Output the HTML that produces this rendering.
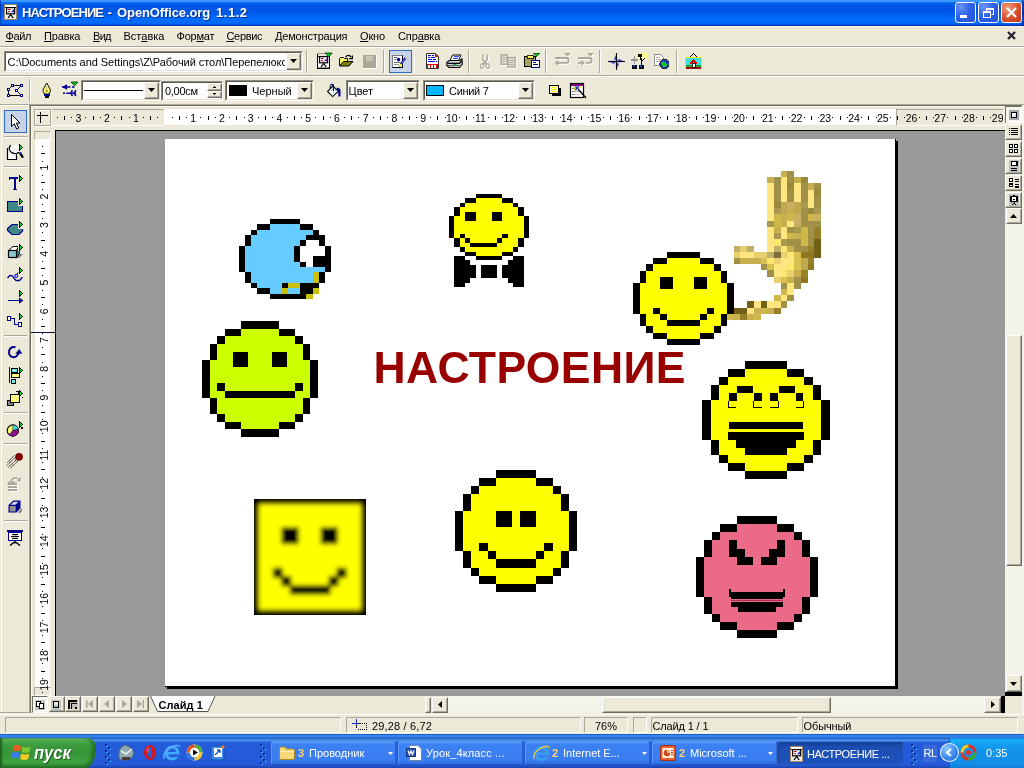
<!DOCTYPE html>
<html lang="ru"><head><meta charset="utf-8"><title>НАСТРОЕНИЕ - OpenOffice.org 1.1.2</title>
<style>
html,body{margin:0;padding:0;background:#ece9d8;}
body{width:1024px;height:768px;overflow:hidden;font-family:"Liberation Sans",sans-serif;font-size:11px;color:#000;}
#root{position:relative;width:1024px;height:768px;overflow:hidden;will-change:transform;}
.a{position:absolute;}
.t{position:absolute;white-space:nowrap;line-height:13px;height:13px;}
svg{position:absolute;overflow:visible;}
.px{shape-rendering:crispEdges;}
.btn{position:absolute;background:#ece9d8;border:1px solid;border-color:#fff #716f64 #716f64 #fff;box-sizing:border-box;}
.btn:after{content:"";position:absolute;left:0;top:0;right:0;bottom:0;border:1px solid;border-color:#ece9d8 #aca899 #aca899 #ece9d8;}
.sunk{position:absolute;box-sizing:border-box;border:1px solid;border-color:#aca899 #fff #fff #aca899;}
.field{position:absolute;box-sizing:border-box;background:#fff;border:1px solid;border-color:#8f8c7f #fff #fff #8f8c7f;}
.field:after{content:"";position:absolute;left:0;top:0;right:0;bottom:0;border:1px solid;border-color:#5a584f #e4e1d2 #e4e1d2 #5a584f;}
.vsep{position:absolute;width:1px;background:#aca899;border-right:1px solid #fff;}
.hsep{position:absolute;height:1px;background:#aca899;border-bottom:1px solid #fff;}
u{text-decoration:underline;text-decoration-thickness:1px;text-underline-offset:1px;}
</style></head><body><div id="root">
<div class="a" style="left:0;top:0;width:1024px;height:26px;background:linear-gradient(#3d95ff 0px,#3d95ff 1px,#3d95ff 1px,#3d95ff 2px,#0473fc 2px,#0473fc 3px,#0265ee 3px,#0265ee 4px,#005ae8 4px,#005ae8 5px,#0057e5 5px,#0057e5 6px,#0057e5 6px,#0057e5 7px,#0057e5 7px,#0057e5 8px,#0057e5 8px,#0057e5 9px,#0057e5 9px,#0057e5 10px,#0057e5 10px,#0057e5 11px,#0057e5 11px,#0057e5 12px,#0059e8 12px,#0059e8 13px,#005cec 13px,#005cec 14px,#005ff0 14px,#005ff0 15px,#0062f4 15px,#0062f4 16px,#0066f9 16px,#0066f9 17px,#0069fd 17px,#0069fd 18px,#026bff 18px,#026bff 19px,#036cff 19px,#036cff 20px,#036cff 20px,#036cff 21px,#036cff 21px,#036cff 22px,#036cff 22px,#036cff 23px,#0064f4 23px,#0064f4 24px,#0052de 24px,#0052de 25px,#0034c4 25px,#0034c4 26px);"></div>
<div class="a" style="left:0px;top:0px;width:1px;height:26px;background:rgba(0,20,120,0.45);"></div><div class="a" style="left:1022px;top:0px;width:2px;height:26px;background:rgba(0,20,120,0.5);"></div>
<svg style="left:4px;top:4px" width="13" height="16" viewBox="0 0 13 16"><rect x="0.5" y="0.5" width="12" height="15" fill="#f0efe6" stroke="#a08868" stroke-width="1"/><rect x="1" y="1" width="11" height="2" fill="#fff"/><rect x="1" y="3" width="11" height="1" fill="#000"/><rect x="2.6" y="3.6" width="8" height="6.2" fill="#fff" stroke="#000" stroke-width="1.2"/><rect x="4" y="5" width="2.6" height="1" fill="#b00000"/><rect x="4" y="7.2" width="2.2" height="1" fill="#b00000"/><path d="M7 8.3L9.6 5.2V8.3Z" fill="#2020e8"/><path d="M9 6L9.9 5V8.3H9Z" fill="#900090"/><path d="M6.6 9.8V11M6.6 10.5L4.3 13.6M6.6 10.5L8.9 13.6" stroke="#000" stroke-width="1.2" stroke-linecap="round" fill="none"/></svg>
<div class="t" style="left:22px;top:5px;color:#fff;font-weight:bold;font-size:13px;line-height:16px;height:16px;text-shadow:1px 1px 0 #0a3296;"><span style="letter-spacing:-0.9px">НАСТРОЕНИЕ</span><span style="letter-spacing:0.8px"> - </span><span style="letter-spacing:-0.12px">OpenOffice.org</span><span style="letter-spacing:2.4px"> </span><span style="letter-spacing:0.5px">1.1.2</span></div>
<div class="a" style="left:955px;top:2px;width:21px;height:21px;box-sizing:border-box;border:1px solid #fff;border-radius:3px;background:radial-gradient(circle at 25% 20%,#6a94f8 0%,#2e62ea 45%,#2452d8 100%);"></div><svg style="left:955px;top:2px" width="21" height="21" viewBox="0 0 21 21"><rect x="5" y="13" width="7" height="3" fill="#fff"/></svg>
<div class="a" style="left:978px;top:2px;width:21px;height:21px;box-sizing:border-box;border:1px solid #fff;border-radius:3px;background:radial-gradient(circle at 25% 20%,#6a94f8 0%,#2e62ea 45%,#2452d8 100%);"></div><svg style="left:978px;top:2px" width="21" height="21" viewBox="0 0 21 21"><path d="M8.5 7.5H15.5V12.5H13.5M8.5 7.5V9.5" stroke="#fff" stroke-width="1" fill="none"/><rect x="8" y="6" width="8" height="2" fill="#fff"/><rect x="5.5" y="10.5" width="7" height="5" fill="none" stroke="#fff"/><rect x="5" y="9" width="8" height="2" fill="#fff"/></svg>
<div class="a" style="left:1001px;top:2px;width:21px;height:21px;box-sizing:border-box;border:1px solid #fff;border-radius:3px;background:radial-gradient(circle at 30% 25%,#f0a080 0%,#d8502c 55%,#b83818 100%);"></div><svg style="left:1001px;top:2px" width="21" height="21" viewBox="0 0 21 21"><path d="M6 6L15 15M15 6L6 15" stroke="#fff" stroke-width="2.2"/></svg>
<div class="a" style="left:0px;top:26px;width:1024px;height:20px;background:#ece9d8;"></div>
<div class="a" style="left:0px;top:26px;width:1024px;height:1px;background:#faf3da;"></div>
<div class="t m" style="left:5.6px;top:30px;letter-spacing:-0.375px;"><u>Ф</u>айл</div>
<div class="t m" style="left:44px;top:30px;letter-spacing:-0.15px;"><u>П</u>равка</div>
<div class="t m" style="left:93px;top:30px;letter-spacing:-0.7px;"><u>В</u>ид</div>
<div class="t m" style="left:123.5px;top:30px;letter-spacing:0px;">Вст<u>а</u>вка</div>
<div class="t m" style="left:176.5px;top:30px;letter-spacing:-0.23px;">Фор<u>м</u>ат</div>
<div class="t m" style="left:226.5px;top:30px;letter-spacing:-0.35px;"><u>С</u>ервис</div>
<div class="t m" style="left:275px;top:30px;letter-spacing:-0.175px;"><u>Д</u>емонстрация</div>
<div class="t m" style="left:360px;top:30px;letter-spacing:-0.15px;"><u>О</u>кно</div>
<div class="t m" style="left:398px;top:30px;letter-spacing:-0.13px;">Спр<u>а</u>вка</div>
<svg style="left:1007px;top:31px" width="9" height="9" viewBox="0 0 9 9"><path d="M1 1L8 8M8 1L1 8" stroke="#2a2438" stroke-width="2.3"/></svg>
<div class="a" style="left:0px;top:46px;width:1024px;height:1px;background:#aca899;"></div>
<div class="a" style="left:0px;top:47px;width:1024px;height:1px;background:#ffffff;"></div>
<div class="a" style="left:0px;top:48px;width:1024px;height:27px;background:#ece9d8;"></div>
<div class="field" style="left:4px;top:51px;width:299px;height:21px;"></div>
<div class="btn" style="left:286px;top:53px;width:15px;height:17px;"></div>
<svg style="left:290px;top:59px" width="7" height="4" viewBox="0 0 7 4"><path d="M0 0H7L3.5 4Z" fill="#000"/></svg>
<div class="t u1" style="left:7.5px;top:56px;width:277px;overflow:hidden;letter-spacing:-0.05px;">C:\Documents and Settings\Z\Рабочий стол\Перепелюкс</div>
<div class="vsep" style="left:306px;top:50px;height:23px;"></div>
<svg style="left:317px;top:53px" width="16" height="16" viewBox="0 0 16 16"><rect x="0.5" y="0.5" width="12" height="15" fill="#fff" stroke="#000" stroke-width="1"/><rect x="0" y="0" width="13" height="1" fill="#9c9a8c"/><rect x="1" y="1" width="11" height="2" fill="#e8e6dc"/><rect x="2.6" y="3.6" width="8" height="6.2" fill="#fff" stroke="#000" stroke-width="1.2"/><rect x="1" y="3" width="11" height="1" fill="#000"/><rect x="4" y="5" width="2.6" height="1" fill="#b00000"/><rect x="4" y="7.2" width="2.2" height="1" fill="#b00000"/><path d="M7 8.3L9.6 5.2V8.3Z" fill="#2020e8"/><path d="M9 6L9.9 5V8.3H9Z" fill="#900090"/><path d="M6.6 9.8V11M6.6 10.5L4.3 13.6M6.6 10.5L8.9 13.6" stroke="#000" stroke-width="1.2" stroke-linecap="round" fill="none"/><rect x="0" y="14.6" width="13" height="1.4" fill="#000"/><path d="M8 0H15.2L11.6 3.8Z" fill="#00d020" stroke="#002800" stroke-width="0.8"/></svg>
<svg style="left:338.3px;top:54px" width="16" height="14" viewBox="0 0 16 14"><path d="M1.5 11.5V4.5L2.5 3.5H5.5L6.5 4.5H9.5V7" fill="#ffff70" stroke="#000" stroke-width="1"/><path d="M1.5 12L5.5 7.5H15L11 12Z" fill="#808000" stroke="#000" stroke-width="1"/><path d="M7.5 3Q10.5 -0.3 13.3 3.2" stroke="#000" stroke-width="1.2" fill="none"/><path d="M11.2 4.6H14.4V1.4" stroke="#000" stroke-width="1.2" fill="none"/></svg>
<svg class="px" style="left:363px;top:55px" width="14" height="14" viewBox="0 0 14 14"><rect x="0" y="0" width="13" height="13" fill="#aca899"/><rect x="0" y="13" width="14" height="1" fill="#fff"/><rect x="13" y="0" width="1" height="14" fill="#fff"/><rect x="3" y="1" width="7" height="5" fill="#c8c4b4"/></svg>
<div class="vsep" style="left:383px;top:50px;height:23px;"></div>
<div class="a" style="left:389px;top:50px;width:23px;height:23px;box-sizing:border-box;border:1px solid #316ac5;background:#c6d3e8;"></div>
<svg style="left:392px;top:54px" width="17" height="15" viewBox="0 0 17 15"><rect x="0.5" y="1.5" width="10" height="12" fill="#fff" stroke="#000" stroke-width="1"/><path d="M0.5 13.5V1.5H10.5" stroke="#808080" stroke-width="1" fill="none"/><rect x="2" y="3" width="3" height="1" fill="#606060"/><rect x="2" y="5" width="2" height="1" fill="#909090"/><circle cx="6.6" cy="5.6" r="1.8" fill="#000090"/><rect x="2" y="8" width="6" height="1" fill="#707070"/><rect x="2" y="10" width="5" height="1" fill="#909090"/><path d="M8.6 10.2L13.6 4" stroke="#0000a8" stroke-width="2.2"/><path d="M9.5 9.6L14.2 3.8" stroke="#fff" stroke-width="0.6"/><path d="M13.4 4.2L14.6 2.8" stroke="#c0c0c0" stroke-width="2"/><path d="M7.6 12L9.2 10" stroke="#ffff20" stroke-width="2"/><rect x="7" y="11.6" width="1.4" height="1" fill="#40a040"/></svg>
<div class="a" style="left:414px;top:50px;width:1px;height:23px;background:#fff;"></div>
<svg style="left:426px;top:53px" width="14" height="16" viewBox="0 0 14 16"><path d="M0.5 0.5H9.5L12.5 3.5V15.5H0.5Z" fill="#fff" stroke="#303030" stroke-width="1"/><path d="M9 0.5V4H12.5Z" fill="#e00000"/><g shape-rendering="crispEdges"><rect x="2" y="2" width="3" height="1" fill="#0000e8"/><rect x="6" y="2" width="2" height="1" fill="#0000e8"/><rect x="2" y="4" width="2" height="1" fill="#0000e8"/><rect x="5" y="4" width="4" height="1" fill="#0000e8"/><rect x="2" y="6" width="4" height="1" fill="#0000e8"/><rect x="7" y="6" width="3" height="1" fill="#0000e8"/><rect x="2" y="8" width="7" height="1" fill="#0000e8"/><rect x="10" y="8" width="1" height="1" fill="#0000e8"/><rect x="1" y="11" width="11" height="4" fill="#e80000"/><rect x="2" y="12" width="2" height="3" fill="#fff"/><rect x="5" y="12" width="2" height="3" fill="#fff"/><rect x="8" y="12" width="2" height="3" fill="#fff"/></g></svg>
<svg style="left:446px;top:54px" width="17" height="15" viewBox="0 0 17 15"><path d="M4 6.5L6.5 1H15L12.5 6.5Z" fill="#fff" stroke="#000" stroke-width="1"/><path d="M8 2.6H13M7.2 4.4H12" stroke="#2040ff" stroke-width="1"/><path d="M0.8 8.5L3.2 6.5H13.5L16 5L16.3 10L13.5 13.5H3L0.8 11.5Z" fill="#d0d0d0" stroke="#000" stroke-width="1.1"/><path d="M1.5 9.3H13.5L16 6.5" stroke="#000" stroke-width="1.2" fill="none"/><path d="M2 11.6H13.3" stroke="#505050" stroke-width="1"/><rect x="7" y="10" width="3.4" height="1.2" fill="#00d040"/></svg>
<div class="vsep" style="left:468px;top:50px;height:23px;"></div>
<svg style="left:478px;top:52px" width="16" height="20" viewBox="478 52 16 20"><g transform="translate(1,1)" fill="none" stroke="#fff"><path d="M482.8 54.5V59.5L486.6 64.2M487.2 54.5V59.5L483.4 64.2" stroke-width="1.5"/><ellipse cx="482.2" cy="66" rx="1.6" ry="2.3" stroke-width="1.3" transform="rotate(25 482.2 66)"/><ellipse cx="487.8" cy="66" rx="1.6" ry="2.3" stroke-width="1.3" transform="rotate(-25 487.8 66)"/></g><g transform="translate(0,0)" fill="none" stroke="#aca899"><path d="M482.8 54.5V59.5L486.6 64.2M487.2 54.5V59.5L483.4 64.2" stroke-width="1.5"/><ellipse cx="482.2" cy="66" rx="1.6" ry="2.3" stroke-width="1.3" transform="rotate(25 482.2 66)"/><ellipse cx="487.8" cy="66" rx="1.6" ry="2.3" stroke-width="1.3" transform="rotate(-25 487.8 66)"/></g></svg>
<svg style="left:498px;top:52px" width="22" height="20" viewBox="498 52 22 20"><g transform="translate(1,1)"><rect x="501.2" y="54.8" width="6" height="9.4" fill="#fff" stroke="#fff" stroke-width="1.5"/><rect x="508" y="57.6" width="7" height="9.4" fill="#fff" stroke="#fff" stroke-width="1.5"/><path d="M502.5 57.5H505.5M502.5 59.5H505.5M502.5 61.5H505M509.5 60.5H513.5M509.5 62.5H513.5M509.5 64.5H513.5" stroke="#fff" stroke-width="1"/></g><g transform="translate(0,0)"><rect x="501.2" y="54.8" width="6" height="9.4" fill="#e6e3d4" stroke="#aca899" stroke-width="1.5"/><rect x="508" y="57.6" width="7" height="9.4" fill="#e6e3d4" stroke="#aca899" stroke-width="1.5"/><path d="M502.5 57.5H505.5M502.5 59.5H505.5M502.5 61.5H505M509.5 60.5H513.5M509.5 62.5H513.5M509.5 64.5H513.5" stroke="#aca899" stroke-width="1"/></g></svg>
<svg class="px" style="left:523px;top:53px" width="18" height="15" viewBox="0 0 18 15"><rect x="1.5" y="3.5" width="11" height="10" rx="1" fill="#a8a060" stroke="#000"/><rect x="4" y="2" width="6" height="3" fill="#ffff60" stroke="#000" stroke-width="0.8"/><rect x="8.5" y="7.5" width="8" height="7" fill="#fff" stroke="#000090" stroke-width="1.6"/><rect x="10" y="9" width="3" height="1" fill="#000090"/><rect x="10" y="11" width="5" height="1" fill="#000090"/><path d="M10 0H17L13.5 3.5Z" fill="#00c020" stroke="#003800" stroke-width="0.6"/></svg>
<div class="vsep" style="left:545px;top:50px;height:23px;"></div>
<svg style="left:550px;top:50px" width="48" height="20" viewBox="550 50 48 20"><g transform="translate(1,1)" fill="#fff" stroke="none"><path d="M564 53H571L567.5 56.6Z"/><path d="M555 58H566.5Q568.6 58 568.6 60.4Q568.6 62.8 566.5 62.8H558" fill="none" stroke="#fff" stroke-width="1.8"/><path d="M558.3 59.8V66L554.8 62.9Z"/><path d="M587 53H594L590.5 56.6Z"/><path d="M578 58H589.5Q591.6 58 591.6 60.4Q591.6 62.8 589.5 62.8H586M578 62.8H582" fill="none" stroke="#fff" stroke-width="1.8"/><path d="M581.3 59.8V66L584.8 62.9Z"/></g><g transform="translate(0,0)" fill="#aca899" stroke="none"><path d="M564 53H571L567.5 56.6Z"/><path d="M555 58H566.5Q568.6 58 568.6 60.4Q568.6 62.8 566.5 62.8H558" fill="none" stroke="#aca899" stroke-width="1.8"/><path d="M558.3 59.8V66L554.8 62.9Z"/><path d="M587 53H594L590.5 56.6Z"/><path d="M578 58H589.5Q591.6 58 591.6 60.4Q591.6 62.8 589.5 62.8H586M578 62.8H582" fill="none" stroke="#aca899" stroke-width="1.8"/><path d="M581.3 59.8V66L584.8 62.9Z"/></g></svg>
<div class="vsep" style="left:599px;top:50px;height:23px;"></div>
<svg style="left:608px;top:53px" width="17" height="17" viewBox="0 0 17 17"><path d="M8.5 0.5L11 6L16.5 8.5L11 11L8.5 16.5L6 11L0.5 8.5L6 6Z" fill="#fff"/><path d="M8.5 0.5L6 6L8.5 8.5ZM16.5 8.5L11 6L8.5 8.5ZM8.5 16.5L11 11L8.5 8.5ZM0.5 8.5L6 11L8.5 8.5Z" fill="#4040b8"/><path d="M8.5 0.5L11 6L8.5 8.5ZM16.5 8.5L11 11L8.5 8.5ZM8.5 16.5L6 11L8.5 8.5ZM0.5 8.5L6 6L8.5 8.5Z" fill="#c8c8f0"/><path d="M8.5 0V17M0 8.5H17" stroke="#000" stroke-width="1" shape-rendering="crispEdges"/></svg>
<svg class="px" style="left:631px;top:53px" width="17" height="16" viewBox="0 0 17 16"><rect x="7" y="0" width="9" height="6" fill="#ffff90"/><path d="M3.5 3V11M0 7H7" stroke="#909090" stroke-width="1.6"/><path d="M9 2L10.5 8M14 5L10.5 8.5V12" stroke="#000" stroke-width="1.3" fill="none"/><circle cx="9" cy="2.5" r="1.5" fill="none" stroke="#000"/><rect x="1" y="12" width="5" height="4" fill="#000"/><rect x="2" y="12" width="2" height="2" fill="#2030c0"/><rect x="8" y="12" width="5" height="4" fill="#000"/><rect x="9" y="12" width="2" height="2" fill="#2030c0"/></svg>
<svg class="px" style="left:654px;top:54px" width="16" height="15" viewBox="0 0 16 15"><path d="M0.5 0.5H6.5L9.5 3.5V11.5H0.5Z" fill="#fff" stroke="#909090"/><rect x="2" y="3" width="4" height="1" fill="#b0b0b0"/><rect x="2" y="5" width="5" height="1" fill="#b0b0b0"/><rect x="2" y="7" width="5" height="1" fill="#b0b0b0"/><circle cx="10.5" cy="10" r="4.6" fill="#1840c0" stroke="#202020"/><path d="M7 9Q9 6 11 8T13 12Q10 14 8.5 12Z" fill="#20c020"/></svg>
<div class="vsep" style="left:676px;top:50px;height:23px;"></div>
<svg class="px" style="left:685px;top:53px" width="17" height="16" viewBox="0 0 17 16"><path d="M5 4L8.5 0.5L12 4" stroke="#000" fill="none"/><rect x="0.5" y="4.5" width="16" height="11" fill="#40e0e0" stroke="#ffe000" stroke-width="1.6"/><rect x="1" y="12" width="15" height="3" fill="#20a020"/><rect x="1" y="14" width="15" height="1.5" fill="#a01010"/><path d="M5 11L8.5 7.5L12 11" stroke="#e00000" stroke-width="1.6" fill="none"/><rect x="7" y="10" width="3" height="4" fill="#fff" stroke="#000" stroke-width="0.8"/></svg>
<div class="a" style="left:0px;top:75px;width:1024px;height:1px;background:#aca899;"></div>
<div class="a" style="left:0px;top:76px;width:1024px;height:1px;background:#ffffff;"></div>
<div class="a" style="left:0px;top:77px;width:1024px;height:27px;background:#ece9d8;"></div>
<svg style="left:0;top:76px" width="84" height="28" viewBox="0 76 84 28"><path d="M12.5 85.5H21.5L16.5 90.5L21.5 95.5H8.5V89.5Z" fill="none" stroke="#000" stroke-width="1"/><g shape-rendering="crispEdges"><rect x="11" y="84" width="3" height="3" fill="#000090"/><rect x="12" y="85" width="1" height="1" fill="#fff"/><rect x="20" y="84" width="3" height="3" fill="#000090"/><rect x="21" y="85" width="1" height="1" fill="#fff"/><rect x="7" y="88" width="3" height="3" fill="#000090"/><rect x="8" y="89" width="1" height="1" fill="#fff"/><rect x="15" y="89" width="3" height="3" fill="#000090"/><rect x="16" y="90" width="1" height="1" fill="#fff"/><rect x="7" y="94" width="3" height="3" fill="#000090"/><rect x="8" y="95" width="1" height="1" fill="#fff"/><rect x="20" y="94" width="3" height="3" fill="#000090"/><rect x="21" y="95" width="1" height="1" fill="#fff"/></g><path d="M46.7 83L50.3 89.5V91.5L49 94H44.5L43.2 91.5V89.5Z" fill="#ffff70" stroke="#000" stroke-width="1"/><path d="M46.7 85V91.5" stroke="#fff" stroke-width="1.6"/><path d="M46.7 86V91" stroke="#c0a000" stroke-width="0.7"/><circle cx="46.7" cy="91" r="0.9" fill="#806000"/><g shape-rendering="crispEdges"><rect x="44" y="94" width="6" height="2" fill="#000090"/><rect x="45" y="96" width="4" height="2" fill="#000"/></g><path d="M71 82H78L74.5 85.8Z" fill="#00d020" stroke="#002800" stroke-width="0.8"/><path d="M62 87H70.5M72 87H74.5M63 93.2H65M66.2 93.2H75.5" stroke="#000090" stroke-width="1.5"/><path d="M62 87L67 84.3V89.7Z" fill="#000090"/><path d="M72.5 90.4Q69.8 93.2 72.5 96M76 90.4Q73.3 93.2 76 96" stroke="#000090" stroke-width="1.6" fill="none"/></svg>
<div class="vsep" style="left:29px;top:79px;height:23px;"></div>
<div class="field" style="left:81px;top:80px;width:80px;height:21px;"></div>
<div class="btn" style="left:144px;top:82px;width:15px;height:17px;"></div>
<svg style="left:148px;top:88px" width="7" height="4" viewBox="0 0 7 4"><path d="M0 0H7L3.5 4Z" fill="#000"/></svg>
<div class="a" style="left:84px;top:90px;width:59px;height:1px;background:#000;"></div>
<div class="field" style="left:161px;top:81px;width:62px;height:20px;"></div>
<div class="t w1" style="left:165px;top:85px;letter-spacing:-0.3px;">0,00см</div>
<div class="btn" style="left:207px;top:83px;width:15px;height:8px;"></div>
<div class="btn" style="left:207px;top:91px;width:15px;height:7px;"></div>
<svg class="px" style="left:213px;top:86px" width="3" height="2" viewBox="0 0 3 2"><rect x="1" y="0" width="1" height="1" fill="#000"/><rect x="0" y="1" width="3" height="1" fill="#000"/></svg>
<svg class="px" style="left:213px;top:93px" width="3" height="2" viewBox="0 0 3 2"><rect x="0" y="0" width="3" height="1" fill="#000"/><rect x="1" y="1" width="1" height="1" fill="#000"/></svg>
<div class="field" style="left:225px;top:80px;width:89px;height:21px;"></div>
<div class="btn" style="left:297px;top:82px;width:15px;height:17px;"></div>
<svg style="left:301px;top:88px" width="7" height="4" viewBox="0 0 7 4"><path d="M0 0H7L3.5 4Z" fill="#000"/></svg>
<div class="a" style="left:229px;top:85px;width:18px;height:11px;background:#000;"></div><div class="t c1" style="left:252px;top:85px;">Черный</div>
<svg style="left:324px;top:80px" width="20" height="22" viewBox="324 80 20 22"><path d="M327.6 91.4L332.8 86L338.4 91.2L332.6 96.6Z" fill="#fff" stroke="#000" stroke-width="1.1"/><path d="M330.3 88.5V85.5" stroke="#000" stroke-width="1.1"/><path d="M330.6 85.2Q331.8 83.6 333.4 85L333.5 91" stroke="#000090" stroke-width="1.3" fill="none"/><path d="M336.8 88.6L339.4 89.8V96.6" stroke="#000090" stroke-width="2.2" fill="none" stroke-linejoin="round"/><rect x="331" y="90" width="1.2" height="1.2" fill="#00e8f0"/><rect x="335" y="90" width="1.2" height="1.2" fill="#00e8f0"/><rect x="333" y="92" width="1.2" height="1.2" fill="#00e8f0"/><rect x="331" y="94" width="1.2" height="1.2" fill="#00e8f0"/></svg>
<div class="field" style="left:346px;top:80px;width:74px;height:21px;"></div>
<div class="btn" style="left:403px;top:82px;width:15px;height:17px;"></div>
<svg style="left:407px;top:88px" width="7" height="4" viewBox="0 0 7 4"><path d="M0 0H7L3.5 4Z" fill="#000"/></svg>
<div class="t c2" style="left:348.5px;top:85px;">Цвет</div>
<div class="field" style="left:423px;top:80px;width:112px;height:21px;"></div>
<div class="btn" style="left:518px;top:82px;width:15px;height:17px;"></div>
<svg style="left:522px;top:88px" width="7" height="4" viewBox="0 0 7 4"><path d="M0 0H7L3.5 4Z" fill="#000"/></svg>
<div class="a" style="left:426px;top:85px;width:18px;height:11px;background:#000;"></div><div class="a" style="left:427px;top:86px;width:16px;height:9px;background:#00b8ff;"></div><div class="t c3" style="left:449px;top:85px;letter-spacing:-0.3px;">Синий 7</div>
<svg class="px" style="left:549px;top:85px" width="13" height="12" viewBox="0 0 13 12"><rect x="3" y="3" width="9" height="8" fill="#000"/><rect x="0.5" y="0.5" width="9" height="8" fill="#ffffd8" stroke="#000"/><rect x="3" y="2" width="1" height="1" fill="#ffe800"/><rect x="3" y="4" width="1" height="1" fill="#ffe800"/><rect x="3" y="6" width="1" height="1" fill="#ffe800"/><rect x="5" y="2" width="1" height="1" fill="#ffe800"/><rect x="5" y="4" width="1" height="1" fill="#ffe800"/><rect x="5" y="6" width="1" height="1" fill="#ffe800"/><rect x="7" y="2" width="1" height="1" fill="#ffe800"/><rect x="7" y="4" width="1" height="1" fill="#ffe800"/><rect x="7" y="6" width="1" height="1" fill="#ffe800"/><rect x="2" y="3" width="1" height="1" fill="#ffe800"/><rect x="2" y="5" width="1" height="1" fill="#ffe800"/><rect x="2" y="7" width="1" height="1" fill="#ffe800"/><rect x="4" y="3" width="1" height="1" fill="#ffe800"/><rect x="4" y="5" width="1" height="1" fill="#ffe800"/><rect x="4" y="7" width="1" height="1" fill="#ffe800"/><rect x="6" y="3" width="1" height="1" fill="#ffe800"/><rect x="6" y="5" width="1" height="1" fill="#ffe800"/><rect x="6" y="7" width="1" height="1" fill="#ffe800"/></svg>
<svg style="left:570px;top:83px" width="17" height="16" viewBox="0 0 17 16"><rect x="0.5" y="0.5" width="13" height="14" fill="#fff" stroke="#000" stroke-width="1.2"/><rect x="1" y="1" width="12" height="2" fill="#800080"/><rect x="2" y="5" width="3" height="1" fill="#808080"/><rect x="2" y="8" width="3" height="1" fill="#808080"/><rect x="5" y="8" width="5" height="1" fill="#c8c8c8"/><rect x="2" y="11" width="3" height="1" fill="#808080"/><rect x="5" y="11" width="5" height="1" fill="#c8c8c8"/><path d="M3.5 3.5L5 6.5M9.5 3L11 5M4.5 7.5H6.5" stroke="#ffe800" stroke-width="1.2"/><path d="M5 3L9 7M9 3L5 7M7 2.5V7.5M4.5 5H9.5" stroke="#2028b8" stroke-width="0.9"/><path d="M8.5 6.5L16 15" stroke="#000" stroke-width="1.3"/><rect x="8.5" y="7" width="1.3" height="1.6" fill="#1030ff"/></svg>
<div class="a" style="left:0px;top:103px;width:1024px;height:1px;background:#ece9d8;"></div>
<div class="a" style="left:0px;top:104px;width:1024px;height:1px;background:#aca899;"></div>
<div class="a" style="left:0px;top:105px;width:31px;height:609px;background:#ece9d8;"></div>
<div class="a" style="left:1px;top:105px;width:28px;height:1px;background:#ffffff;"></div>
<div class="a" style="left:1px;top:105px;width:1px;height:607px;background:#ffffff;"></div>
<div class="a" style="left:29px;top:105px;width:1px;height:608px;background:#aca899;"></div>
<div class="a" style="left:0px;top:712px;width:30px;height:1px;background:#aca899;"></div>
<div class="a" style="left:4px;top:110px;width:23px;height:23px;box-sizing:border-box;border:1px solid #316ac5;background:#c6d3e8;"></div>
<div class="hsep" style="left:4px;top:136px;width:23px;"></div>
<div class="hsep" style="left:4px;top:166px;width:23px;"></div>
<div class="hsep" style="left:4px;top:335px;width:23px;"></div>
<div class="hsep" style="left:4px;top:412px;width:23px;"></div>
<div class="hsep" style="left:4px;top:443px;width:23px;"></div>
<div class="hsep" style="left:4px;top:520px;width:23px;"></div>
<svg style="left:0;top:105px" width="31" height="500" viewBox="0 105 31 500"><path d="M11.5 114.5V126.5L14.3 123.8L16.6 129L18.6 128.1L16.4 123H20Z" fill="#fff" stroke="#000" stroke-width="1"/><path d="M7.5 148V159.5H16.5V154.5" fill="#fff" stroke="#000" stroke-width="1.2"/><path d="M10.5 145.3Q8.3 147.5 9.8 150.5Q11.5 153.6 15 153.6L17.5 153.4L18.5 152.6L18.5 145.5Z" fill="#fff"/><path d="M10.8 145.2Q8.3 147.5 9.8 150.5Q11.5 153.6 15 153.6L17 153.5L18 152.7L19.2 152.6" fill="none" stroke="#000" stroke-width="1.2"/><path d="M11.5 147L12.5 148.3M14 146.5L14.6 146.5M13.5 150.5L17.5 149" stroke="#c8c8c8" stroke-width="0.8"/><path d="M20.3 153.3L22.5 156.8" stroke="#000" stroke-width="2.4" stroke-linecap="round"/><rect x="19" y="153" width="1.3" height="1.3" fill="#2030ff"/><rect x="20" y="152" width="1.3" height="1.3" fill="#2030c0"/><g shape-rendering="crispEdges"><rect x="19" y="144" width="1" height="7" fill="#000"/><rect x="20" y="145" width="1" height="1" fill="#000"/><rect x="20" y="149" width="1" height="1" fill="#000"/><rect x="21" y="146" width="1" height="1" fill="#000"/><rect x="21" y="148" width="1" height="1" fill="#000"/><rect x="22" y="147" width="1" height="1" fill="#000"/><rect x="20" y="146" width="1" height="3" fill="#00e020"/><rect x="21" y="147" width="1" height="1" fill="#00e020"/></g><g shape-rendering="crispEdges"><rect x="9" y="177" width="9" height="2" fill="#000088"/><rect x="9" y="179" width="1" height="1" fill="#000088"/><rect x="14" y="179" width="2" height="10" fill="#000088"/><rect x="13" y="189" width="4" height="1" fill="#000088"/><rect x="19" y="175" width="1" height="7" fill="#000"/><rect x="20" y="176" width="1" height="1" fill="#000"/><rect x="20" y="180" width="1" height="1" fill="#000"/><rect x="21" y="177" width="1" height="1" fill="#000"/><rect x="21" y="179" width="1" height="1" fill="#000"/><rect x="22" y="178" width="1" height="1" fill="#000"/><rect x="20" y="177" width="1" height="3" fill="#00e020"/><rect x="21" y="178" width="1" height="1" fill="#00e020"/></g><g shape-rendering="crispEdges"><rect x="7" y="201" width="16" height="11" fill="#000088"/><rect x="8" y="202" width="14" height="9" fill="#408888"/><rect x="18" y="197" width="6" height="9" fill="#ece9d8"/><rect x="22" y="206" width="1" height="1" fill="#000088"/><rect x="19" y="198" width="1" height="7" fill="#000"/><rect x="20" y="199" width="1" height="1" fill="#000"/><rect x="20" y="203" width="1" height="1" fill="#000"/><rect x="21" y="200" width="1" height="1" fill="#000"/><rect x="21" y="202" width="1" height="1" fill="#000"/><rect x="22" y="201" width="1" height="1" fill="#000"/><rect x="20" y="200" width="1" height="3" fill="#00e020"/><rect x="21" y="201" width="1" height="1" fill="#00e020"/></g><path d="M12 224.5H19L22.5 228V231L19 234.5H12L7.5 230.5V228.5Z" fill="#408888" stroke="#000088" stroke-width="1.2"/><rect x="18" y="220" width="6" height="9" fill="#ece9d8"/><g shape-rendering="crispEdges"><rect x="19" y="221" width="1" height="7" fill="#000"/><rect x="20" y="222" width="1" height="1" fill="#000"/><rect x="20" y="226" width="1" height="1" fill="#000"/><rect x="21" y="223" width="1" height="1" fill="#000"/><rect x="21" y="225" width="1" height="1" fill="#000"/><rect x="22" y="224" width="1" height="1" fill="#000"/><rect x="20" y="223" width="1" height="3" fill="#00e020"/><rect x="21" y="224" width="1" height="1" fill="#00e020"/></g><path d="M10 258L17 254H23L19 258Z" fill="#808080"/><path d="M8.5 250.5L13 246.5H18.5L16.5 250.5Z" fill="#fff" stroke="#000" stroke-width="1"/><path d="M16.5 250.5L19.5 247V253.5L16.5 257.5Z" fill="#208080" stroke="#000" stroke-width="0.8"/><rect x="8.5" y="250.5" width="8" height="7" fill="#88c8c8" stroke="#000" stroke-width="1.2"/><rect x="18" y="243" width="6" height="8" fill="#ece9d8"/><g shape-rendering="crispEdges"><rect x="19" y="244" width="1" height="7" fill="#000"/><rect x="20" y="245" width="1" height="1" fill="#000"/><rect x="20" y="249" width="1" height="1" fill="#000"/><rect x="21" y="246" width="1" height="1" fill="#000"/><rect x="21" y="248" width="1" height="1" fill="#000"/><rect x="22" y="247" width="1" height="1" fill="#000"/><rect x="20" y="246" width="1" height="3" fill="#00e020"/><rect x="21" y="247" width="1" height="1" fill="#00e020"/></g><path d="M7.5 278L9.5 275.7H12L16 280.5H19.5L22.5 277.3" fill="none" stroke="#000088" stroke-width="1.3" stroke-linejoin="round"/><circle cx="16.3" cy="275.8" r="1.5" fill="#fff" stroke="#1020e0" stroke-width="1.2"/><path d="M17 274L18 272.6" stroke="#000" stroke-width="1"/><g shape-rendering="crispEdges"><rect x="19" y="267" width="1" height="7" fill="#000"/><rect x="20" y="268" width="1" height="1" fill="#000"/><rect x="20" y="272" width="1" height="1" fill="#000"/><rect x="21" y="269" width="1" height="1" fill="#000"/><rect x="21" y="271" width="1" height="1" fill="#000"/><rect x="22" y="270" width="1" height="1" fill="#000"/><rect x="20" y="269" width="1" height="3" fill="#00e020"/><rect x="21" y="270" width="1" height="1" fill="#00e020"/></g><g shape-rendering="crispEdges"><rect x="8" y="300" width="11" height="1" fill="#000088"/></g><path d="M19 297.5L23.5 300.5L19 303.8Z" fill="#000088"/><g shape-rendering="crispEdges"><rect x="19" y="290" width="1" height="7" fill="#000"/><rect x="20" y="291" width="1" height="1" fill="#000"/><rect x="20" y="295" width="1" height="1" fill="#000"/><rect x="21" y="292" width="1" height="1" fill="#000"/><rect x="21" y="294" width="1" height="1" fill="#000"/><rect x="22" y="293" width="1" height="1" fill="#000"/><rect x="20" y="292" width="1" height="3" fill="#00e020"/><rect x="21" y="293" width="1" height="1" fill="#00e020"/></g><g shape-rendering="crispEdges"><rect x="7" y="316" width="4" height="5" fill="#000088"/><rect x="8" y="317" width="2" height="3" fill="#fff"/><rect x="18" y="322" width="4" height="5" fill="#000088"/><rect x="19" y="323" width="2" height="3" fill="#fff"/><rect x="11" y="318" width="4" height="1" fill="#000088"/><rect x="14" y="318" width="1" height="7" fill="#000088"/><rect x="14" y="324" width="4" height="1" fill="#000088"/><rect x="19" y="313" width="1" height="7" fill="#000"/><rect x="20" y="314" width="1" height="1" fill="#000"/><rect x="20" y="318" width="1" height="1" fill="#000"/><rect x="21" y="315" width="1" height="1" fill="#000"/><rect x="21" y="317" width="1" height="1" fill="#000"/><rect x="22" y="316" width="1" height="1" fill="#000"/><rect x="20" y="315" width="1" height="3" fill="#00e020"/><rect x="21" y="316" width="1" height="1" fill="#00e020"/></g><path d="M15.5 347.2Q12.5 346.6 10.5 348.3Q8.4 350.5 9 353.5Q10 357 13.7 357.2Q17.3 357 18.5 353" fill="none" stroke="#000088" stroke-width="2"/><path d="M15.3 353.8L19.3 349L22.3 353.8Z" fill="#000088"/><g shape-rendering="crispEdges"><rect x="9" y="367" width="1" height="16" fill="#000088"/><rect x="11" y="368" width="7" height="5" fill="#000"/><rect x="12" y="369" width="5" height="3" fill="#60e8e8"/><rect x="13" y="370" width="2" height="1" fill="#fff"/><rect x="11" y="373" width="9" height="5" fill="#000"/><rect x="12" y="374" width="7" height="3" fill="#ffff60"/><rect x="13" y="375" width="3" height="1" fill="#fff"/><rect x="11" y="379" width="5" height="5" fill="#000"/><rect x="12" y="380" width="3" height="3" fill="#60e8e8"/><rect x="13" y="381" width="1" height="1" fill="#fff"/><rect x="19" y="367" width="1" height="7" fill="#000"/><rect x="20" y="368" width="1" height="1" fill="#000"/><rect x="20" y="372" width="1" height="1" fill="#000"/><rect x="21" y="369" width="1" height="1" fill="#000"/><rect x="21" y="371" width="1" height="1" fill="#000"/><rect x="22" y="370" width="1" height="1" fill="#000"/><rect x="20" y="369" width="1" height="3" fill="#00e020"/><rect x="21" y="370" width="1" height="1" fill="#00e020"/></g><g shape-rendering="crispEdges"><rect x="7" y="400" width="7" height="6" fill="#000"/><rect x="8" y="401" width="5" height="4" fill="#808080"/><rect x="10" y="394" width="10" height="9" fill="#000"/><rect x="11" y="395" width="8" height="7" fill="#ffff90"/><rect x="12" y="396" width="1" height="1" fill="#ffe000"/><rect x="15" y="396" width="1" height="1" fill="#ffe000"/><rect x="13" y="398" width="1" height="1" fill="#ffe000"/><rect x="16" y="399" width="1" height="1" fill="#ffe000"/><rect x="12" y="400" width="1" height="1" fill="#ffe000"/><rect x="16" y="391" width="3" height="1" fill="#000"/><rect x="18" y="391" width="1" height="4" fill="#000"/><rect x="22" y="397" width="1" height="1" fill="#000"/><rect x="19" y="390" width="1" height="7" fill="#000"/><rect x="20" y="391" width="1" height="1" fill="#000"/><rect x="20" y="395" width="1" height="1" fill="#000"/><rect x="21" y="392" width="1" height="1" fill="#000"/><rect x="21" y="394" width="1" height="1" fill="#000"/><rect x="22" y="393" width="1" height="1" fill="#000"/><rect x="20" y="392" width="1" height="3" fill="#00e020"/><rect x="21" y="393" width="1" height="1" fill="#00e020"/></g><circle cx="12.8" cy="430.5" r="5.6" fill="#ffff70" stroke="#000" stroke-width="1.1"/><path d="M12.8 430.5V425A5.6 5.6 0 0 1 18.3 429.5Z" fill="#40e0e0" stroke="#000" stroke-width="0.5"/><path d="M12.8 430.5L18.3 429.5A5.6 5.6 0 0 1 9 434.8Z" fill="#901090" stroke="#000" stroke-width="0.5"/><g shape-rendering="crispEdges"><rect x="19" y="421" width="1" height="7" fill="#000"/><rect x="20" y="422" width="1" height="1" fill="#000"/><rect x="20" y="426" width="1" height="1" fill="#000"/><rect x="21" y="423" width="1" height="1" fill="#000"/><rect x="21" y="425" width="1" height="1" fill="#000"/><rect x="22" y="424" width="1" height="1" fill="#000"/><rect x="20" y="423" width="1" height="3" fill="#00e020"/><rect x="21" y="424" width="1" height="1" fill="#00e020"/><rect x="21" y="427" width="2" height="2" fill="#000"/></g><path d="M7 465.5L15 457.5M8.5 467L16.5 459.5M10.5 468L18 461M7.5 462.5L14 455.5" stroke="#000" stroke-width="1" stroke-dasharray="1.2 0.6"/><circle cx="19" cy="456.8" r="3.9" fill="#800000"/><g transform="translate(1,1)"><path d="M11 481Q14.5 475.5 18.5 479.5" stroke="#fff" stroke-width="1.6" fill="none"/><path d="M16.5 481.5L21 481.5L20.5 477Z" fill="#fff"/><rect x="8" y="483" width="9" height="2" fill="#fff"/><rect x="8" y="486" width="9" height="2" fill="#fff"/><rect x="8" y="489" width="9" height="2" fill="#fff"/></g><path d="M11 481Q14.5 475.5 18.5 479.5" stroke="#aca899" stroke-width="1.6" fill="none"/><path d="M16.5 481.5L21 481.5L20.5 477Z" fill="#aca899"/><path d="M8 484Q8 482 10 482H15" stroke="#aca899" stroke-width="1.3" fill="none"/><rect x="8" y="483" width="9" height="2" fill="#aca899"/><rect x="8" y="486" width="9" height="2" fill="#aca899"/><rect x="8" y="489" width="9" height="2" fill="#aca899"/><path d="M18 512L22 508V510.5L20 513.5Z" fill="#808080"/><path d="M8.5 505L13.5 500.5H20.5V508L16.5 512.5H8.5Z" fill="#000088"/><rect x="9.7" y="506" width="6" height="5.5" fill="#909090"/><path d="M10.5 504.8L14 501.8H18.5L15.5 504.8Z" fill="#d8d8f0"/><g shape-rendering="crispEdges"><rect x="7" y="530" width="16" height="2" fill="#000088"/><rect x="8" y="532" width="14" height="9" fill="#000088"/><rect x="9" y="533" width="12" height="7" fill="#fff"/><rect x="12" y="534" width="6" height="1" fill="#000"/><rect x="11" y="536" width="8" height="1" fill="#000"/><rect x="12" y="538" width="6" height="1" fill="#000"/><rect x="13" y="535" width="4" height="1" fill="#c0c0c0"/><rect x="13" y="537" width="4" height="1" fill="#c0c0c0"/></g><path d="M15 541V543.5M15 541.5L10 545.5M15 541.5L20 545.5" stroke="#000" stroke-width="1.5" fill="none"/></svg>
<div class="a" style="left:30px;top:105px;width:994px;height:1px;background:#716f64;"></div>
<div class="a" style="left:31px;top:106px;width:993px;height:1px;background:#fbf8e8;"></div>
<div class="a" style="left:30px;top:105px;width:1px;height:608px;background:#716f64;"></div>
<div class="a" style="left:31px;top:106px;width:1px;height:607px;background:#fbf8e8;"></div>
<div class="a" style="left:35px;top:110px;width:17px;height:17px;box-sizing:border-box;border:1px solid #fff;"></div>
<div class="a" style="left:34px;top:109px;width:17px;height:17px;box-sizing:border-box;border:1px solid #aca899;"></div>
<svg class="px" style="left:37px;top:112px" width="11" height="11" viewBox="0 0 11 11"><path d="M3.5 0V11M0 3.5H11" stroke="#000" stroke-width="1"/></svg>
<div class="a" style="left:52px;top:109px;width:952px;height:16px;background:#ece9d8;"></div>
<div class="a" style="left:164px;top:109px;width:732px;height:16px;background:#fff;"></div>
<div class="sunk" style="left:52px;top:109px;width:112px;height:17px;border-right:none;border-left:none;"></div>
<div class="sunk" style="left:896px;top:109px;width:108px;height:17px;"></div>
<svg style="left:52px;top:109px" width="952" height="16" font-family="Liberation Sans, sans-serif" font-size="10.5px" fill="#000"><rect class="px" x="5" y="8" width="1" height="1" fill="#000"/><rect class="px" x="12" y="7" width="1" height="4" fill="#000"/><rect class="px" x="19" y="8" width="1" height="1" fill="#000"/><text x="26.3" y="12.7" text-anchor="middle">3</text><rect class="px" x="33" y="8" width="1" height="1" fill="#000"/><rect class="px" x="41" y="7" width="1" height="4" fill="#000"/><rect class="px" x="48" y="8" width="1" height="1" fill="#000"/><text x="55.0" y="12.7" text-anchor="middle">2</text><rect class="px" x="62" y="8" width="1" height="1" fill="#000"/><rect class="px" x="69" y="7" width="1" height="4" fill="#000"/><rect class="px" x="77" y="8" width="1" height="1" fill="#000"/><text x="83.8" y="12.7" text-anchor="middle">1</text><rect class="px" x="91" y="8" width="1" height="1" fill="#000"/><rect class="px" x="98" y="7" width="1" height="4" fill="#000"/><rect class="px" x="105" y="8" width="1" height="1" fill="#000"/><rect class="px" x="120" y="8" width="1" height="1" fill="#000"/><rect class="px" x="127" y="7" width="1" height="4" fill="#000"/><rect class="px" x="134" y="8" width="1" height="1" fill="#000"/><text x="141.2" y="12.7" text-anchor="middle">1</text><rect class="px" x="148" y="8" width="1" height="1" fill="#000"/><rect class="px" x="156" y="7" width="1" height="4" fill="#000"/><rect class="px" x="163" y="8" width="1" height="1" fill="#000"/><text x="170.0" y="12.7" text-anchor="middle">2</text><rect class="px" x="177" y="8" width="1" height="1" fill="#000"/><rect class="px" x="184" y="7" width="1" height="4" fill="#000"/><rect class="px" x="192" y="8" width="1" height="1" fill="#000"/><text x="198.7" y="12.7" text-anchor="middle">3</text><rect class="px" x="206" y="8" width="1" height="1" fill="#000"/><rect class="px" x="213" y="7" width="1" height="4" fill="#000"/><rect class="px" x="220" y="8" width="1" height="1" fill="#000"/><text x="227.4" y="12.7" text-anchor="middle">4</text><rect class="px" x="235" y="8" width="1" height="1" fill="#000"/><rect class="px" x="242" y="7" width="1" height="4" fill="#000"/><rect class="px" x="249" y="8" width="1" height="1" fill="#000"/><text x="256.1" y="12.7" text-anchor="middle">5</text><rect class="px" x="263" y="8" width="1" height="1" fill="#000"/><rect class="px" x="271" y="7" width="1" height="4" fill="#000"/><rect class="px" x="278" y="8" width="1" height="1" fill="#000"/><text x="284.9" y="12.7" text-anchor="middle">6</text><rect class="px" x="292" y="8" width="1" height="1" fill="#000"/><rect class="px" x="299" y="7" width="1" height="4" fill="#000"/><rect class="px" x="306" y="8" width="1" height="1" fill="#000"/><text x="313.6" y="12.7" text-anchor="middle">7</text><rect class="px" x="321" y="8" width="1" height="1" fill="#000"/><rect class="px" x="328" y="7" width="1" height="4" fill="#000"/><rect class="px" x="335" y="8" width="1" height="1" fill="#000"/><text x="342.3" y="12.7" text-anchor="middle">8</text><rect class="px" x="350" y="8" width="1" height="1" fill="#000"/><rect class="px" x="357" y="7" width="1" height="4" fill="#000"/><rect class="px" x="364" y="8" width="1" height="1" fill="#000"/><text x="371.1" y="12.7" text-anchor="middle">9</text><rect class="px" x="378" y="8" width="1" height="1" fill="#000"/><rect class="px" x="385" y="7" width="1" height="4" fill="#000"/><rect class="px" x="393" y="8" width="1" height="1" fill="#000"/><text x="399.8" y="12.7" text-anchor="middle">10</text><rect class="px" x="407" y="8" width="1" height="1" fill="#000"/><rect class="px" x="414" y="7" width="1" height="4" fill="#000"/><rect class="px" x="421" y="8" width="1" height="1" fill="#000"/><text x="428.5" y="12.7" text-anchor="middle">11</text><rect class="px" x="436" y="8" width="1" height="1" fill="#000"/><rect class="px" x="443" y="7" width="1" height="4" fill="#000"/><rect class="px" x="450" y="8" width="1" height="1" fill="#000"/><text x="457.3" y="12.7" text-anchor="middle">12</text><rect class="px" x="464" y="8" width="1" height="1" fill="#000"/><rect class="px" x="472" y="7" width="1" height="4" fill="#000"/><rect class="px" x="479" y="8" width="1" height="1" fill="#000"/><text x="486.0" y="12.7" text-anchor="middle">13</text><rect class="px" x="493" y="8" width="1" height="1" fill="#000"/><rect class="px" x="500" y="7" width="1" height="4" fill="#000"/><rect class="px" x="508" y="8" width="1" height="1" fill="#000"/><text x="514.7" y="12.7" text-anchor="middle">14</text><rect class="px" x="522" y="8" width="1" height="1" fill="#000"/><rect class="px" x="529" y="7" width="1" height="4" fill="#000"/><rect class="px" x="536" y="8" width="1" height="1" fill="#000"/><text x="543.5" y="12.7" text-anchor="middle">15</text><rect class="px" x="551" y="8" width="1" height="1" fill="#000"/><rect class="px" x="558" y="7" width="1" height="4" fill="#000"/><rect class="px" x="565" y="8" width="1" height="1" fill="#000"/><text x="572.2" y="12.7" text-anchor="middle">16</text><rect class="px" x="579" y="8" width="1" height="1" fill="#000"/><rect class="px" x="587" y="7" width="1" height="4" fill="#000"/><rect class="px" x="594" y="8" width="1" height="1" fill="#000"/><text x="600.9" y="12.7" text-anchor="middle">17</text><rect class="px" x="608" y="8" width="1" height="1" fill="#000"/><rect class="px" x="615" y="7" width="1" height="4" fill="#000"/><rect class="px" x="622" y="8" width="1" height="1" fill="#000"/><text x="629.6" y="12.7" text-anchor="middle">18</text><rect class="px" x="637" y="8" width="1" height="1" fill="#000"/><rect class="px" x="644" y="7" width="1" height="4" fill="#000"/><rect class="px" x="651" y="8" width="1" height="1" fill="#000"/><text x="658.4" y="12.7" text-anchor="middle">19</text><rect class="px" x="666" y="8" width="1" height="1" fill="#000"/><rect class="px" x="673" y="7" width="1" height="4" fill="#000"/><rect class="px" x="680" y="8" width="1" height="1" fill="#000"/><text x="687.1" y="12.7" text-anchor="middle">20</text><rect class="px" x="694" y="8" width="1" height="1" fill="#000"/><rect class="px" x="701" y="7" width="1" height="4" fill="#000"/><rect class="px" x="709" y="8" width="1" height="1" fill="#000"/><text x="715.8" y="12.7" text-anchor="middle">21</text><rect class="px" x="723" y="8" width="1" height="1" fill="#000"/><rect class="px" x="730" y="7" width="1" height="4" fill="#000"/><rect class="px" x="737" y="8" width="1" height="1" fill="#000"/><text x="744.6" y="12.7" text-anchor="middle">22</text><rect class="px" x="752" y="8" width="1" height="1" fill="#000"/><rect class="px" x="759" y="7" width="1" height="4" fill="#000"/><rect class="px" x="766" y="8" width="1" height="1" fill="#000"/><text x="773.3" y="12.7" text-anchor="middle">23</text><rect class="px" x="780" y="8" width="1" height="1" fill="#000"/><rect class="px" x="788" y="7" width="1" height="4" fill="#000"/><rect class="px" x="795" y="8" width="1" height="1" fill="#000"/><text x="802.0" y="12.7" text-anchor="middle">24</text><rect class="px" x="809" y="8" width="1" height="1" fill="#000"/><rect class="px" x="816" y="7" width="1" height="4" fill="#000"/><rect class="px" x="824" y="8" width="1" height="1" fill="#000"/><text x="830.8" y="12.7" text-anchor="middle">25</text><rect class="px" x="838" y="8" width="1" height="1" fill="#000"/><rect class="px" x="845" y="7" width="1" height="4" fill="#000"/><rect class="px" x="852" y="8" width="1" height="1" fill="#000"/><text x="859.5" y="12.7" text-anchor="middle">26</text><rect class="px" x="867" y="8" width="1" height="1" fill="#000"/><rect class="px" x="874" y="7" width="1" height="4" fill="#000"/><rect class="px" x="881" y="8" width="1" height="1" fill="#000"/><text x="888.2" y="12.7" text-anchor="middle">27</text><rect class="px" x="895" y="8" width="1" height="1" fill="#000"/><rect class="px" x="903" y="7" width="1" height="4" fill="#000"/><rect class="px" x="910" y="8" width="1" height="1" fill="#000"/><text x="916.9" y="12.7" text-anchor="middle">28</text><rect class="px" x="924" y="8" width="1" height="1" fill="#000"/><rect class="px" x="931" y="7" width="1" height="4" fill="#000"/><rect class="px" x="938" y="8" width="1" height="1" fill="#000"/><text x="945.7" y="12.7" text-anchor="middle">29</text></svg>
<div class="a" style="left:34px;top:131px;width:17px;height:565px;background:#ece9d8;"></div>
<div class="a" style="left:35px;top:139px;width:15px;height:548px;background:#fff;"></div>
<div class="sunk" style="left:34px;top:131px;width:17px;height:8px;border-bottom:none;"></div>
<div class="sunk" style="left:34px;top:687px;width:17px;height:9px;"></div>
<svg style="left:34px;top:131px" width="17" height="565" font-family="Liberation Sans, sans-serif" font-size="10.5px" fill="#000"><rect class="px" x="8" y="15" width="1" height="1" fill="#000"/><rect class="px" x="7" y="22" width="4" height="1" fill="#000"/><rect class="px" x="8" y="30" width="1" height="1" fill="#000"/><text transform="translate(14,36.7) rotate(-90)" text-anchor="middle">1</text><rect class="px" x="8" y="44" width="1" height="1" fill="#000"/><rect class="px" x="7" y="51" width="4" height="1" fill="#000"/><rect class="px" x="8" y="58" width="1" height="1" fill="#000"/><text transform="translate(14,65.5) rotate(-90)" text-anchor="middle">2</text><rect class="px" x="8" y="73" width="1" height="1" fill="#000"/><rect class="px" x="7" y="80" width="4" height="1" fill="#000"/><rect class="px" x="8" y="87" width="1" height="1" fill="#000"/><text transform="translate(14,94.2) rotate(-90)" text-anchor="middle">3</text><rect class="px" x="8" y="101" width="1" height="1" fill="#000"/><rect class="px" x="7" y="109" width="4" height="1" fill="#000"/><rect class="px" x="8" y="116" width="1" height="1" fill="#000"/><text transform="translate(14,122.9) rotate(-90)" text-anchor="middle">4</text><rect class="px" x="8" y="130" width="1" height="1" fill="#000"/><rect class="px" x="7" y="137" width="4" height="1" fill="#000"/><rect class="px" x="8" y="144" width="1" height="1" fill="#000"/><text transform="translate(14,151.6) rotate(-90)" text-anchor="middle">5</text><rect class="px" x="8" y="159" width="1" height="1" fill="#000"/><rect class="px" x="7" y="166" width="4" height="1" fill="#000"/><rect class="px" x="8" y="173" width="1" height="1" fill="#000"/><text transform="translate(14,180.4) rotate(-90)" text-anchor="middle">6</text><rect class="px" x="8" y="188" width="1" height="1" fill="#000"/><rect class="px" x="7" y="195" width="4" height="1" fill="#000"/><rect class="px" x="8" y="202" width="1" height="1" fill="#000"/><text transform="translate(14,209.1) rotate(-90)" text-anchor="middle">7</text><rect class="px" x="8" y="216" width="1" height="1" fill="#000"/><rect class="px" x="7" y="223" width="4" height="1" fill="#000"/><rect class="px" x="8" y="231" width="1" height="1" fill="#000"/><text transform="translate(14,237.8) rotate(-90)" text-anchor="middle">8</text><rect class="px" x="8" y="245" width="1" height="1" fill="#000"/><rect class="px" x="7" y="252" width="4" height="1" fill="#000"/><rect class="px" x="8" y="259" width="1" height="1" fill="#000"/><text transform="translate(14,266.6) rotate(-90)" text-anchor="middle">9</text><rect class="px" x="8" y="274" width="1" height="1" fill="#000"/><rect class="px" x="7" y="281" width="4" height="1" fill="#000"/><rect class="px" x="8" y="288" width="1" height="1" fill="#000"/><text transform="translate(14,295.3) rotate(-90)" text-anchor="middle">10</text><rect class="px" x="8" y="302" width="1" height="1" fill="#000"/><rect class="px" x="7" y="310" width="4" height="1" fill="#000"/><rect class="px" x="8" y="317" width="1" height="1" fill="#000"/><text transform="translate(14,324.0) rotate(-90)" text-anchor="middle">11</text><rect class="px" x="8" y="331" width="1" height="1" fill="#000"/><rect class="px" x="7" y="338" width="4" height="1" fill="#000"/><rect class="px" x="8" y="346" width="1" height="1" fill="#000"/><text transform="translate(14,352.8) rotate(-90)" text-anchor="middle">12</text><rect class="px" x="8" y="360" width="1" height="1" fill="#000"/><rect class="px" x="7" y="367" width="4" height="1" fill="#000"/><rect class="px" x="8" y="374" width="1" height="1" fill="#000"/><text transform="translate(14,381.5) rotate(-90)" text-anchor="middle">13</text><rect class="px" x="8" y="389" width="1" height="1" fill="#000"/><rect class="px" x="7" y="396" width="4" height="1" fill="#000"/><rect class="px" x="8" y="403" width="1" height="1" fill="#000"/><text transform="translate(14,410.2) rotate(-90)" text-anchor="middle">14</text><rect class="px" x="8" y="417" width="1" height="1" fill="#000"/><rect class="px" x="7" y="425" width="4" height="1" fill="#000"/><rect class="px" x="8" y="432" width="1" height="1" fill="#000"/><text transform="translate(14,439.0) rotate(-90)" text-anchor="middle">15</text><rect class="px" x="8" y="446" width="1" height="1" fill="#000"/><rect class="px" x="7" y="453" width="4" height="1" fill="#000"/><rect class="px" x="8" y="460" width="1" height="1" fill="#000"/><text transform="translate(14,467.7) rotate(-90)" text-anchor="middle">16</text><rect class="px" x="8" y="475" width="1" height="1" fill="#000"/><rect class="px" x="7" y="482" width="4" height="1" fill="#000"/><rect class="px" x="8" y="489" width="1" height="1" fill="#000"/><text transform="translate(14,496.4) rotate(-90)" text-anchor="middle">17</text><rect class="px" x="8" y="504" width="1" height="1" fill="#000"/><rect class="px" x="7" y="511" width="4" height="1" fill="#000"/><rect class="px" x="8" y="518" width="1" height="1" fill="#000"/><text transform="translate(14,525.1) rotate(-90)" text-anchor="middle">18</text><rect class="px" x="8" y="532" width="1" height="1" fill="#000"/><rect class="px" x="7" y="540" width="4" height="1" fill="#000"/><rect class="px" x="8" y="547" width="1" height="1" fill="#000"/><text transform="translate(14,553.9) rotate(-90)" text-anchor="middle">19</text><rect class="px" x="8" y="561" width="1" height="1" fill="#000"/></svg>
<div class="a" style="left:31px;top:332px;width:24px;height:1px;background:#10103a;"></div>
<div class="a" style="left:55px;top:130px;width:950px;height:566px;background:#000;"></div>
<div class="a" style="left:56px;top:131px;width:949px;height:565px;background:#999999;"></div>
<div class="a" style="left:167px;top:141px;width:731px;height:548px;background:#000;"></div>
<div class="a" style="left:165px;top:139px;width:731px;height:548px;background:#000;"></div>
<div class="a" style="left:165px;top:139px;width:730px;height:547px;background:#fff;"></div>
<div class="t big" style="left:373.5px;top:341px;font-weight:bold;font-size:44.5px;line-height:54px;height:54px;color:#990000;letter-spacing:0.38px;">НАСТРОЕНИЕ</div>
<svg class="px" style="left:239px;top:219px" width="92" height="80" viewBox="0 0 15 15" preserveAspectRatio="none"><rect x="5" y="0" width="5" height="1" fill="#000000"/><rect x="3" y="1" width="2" height="1" fill="#000000"/><rect x="5" y="1" width="5" height="1" fill="#66ccff"/><rect x="10" y="1" width="2" height="1" fill="#000000"/><rect x="2" y="2" width="1" height="1" fill="#000000"/><rect x="3" y="2" width="9" height="1" fill="#66ccff"/><rect x="12" y="2" width="1" height="1" fill="#000000"/><rect x="1" y="3" width="1" height="1" fill="#000000"/><rect x="2" y="3" width="9" height="1" fill="#66ccff"/><rect x="11" y="3" width="3" height="1" fill="#000000"/><rect x="1" y="4" width="1" height="1" fill="#000000"/><rect x="2" y="4" width="8" height="1" fill="#66ccff"/><rect x="10" y="4" width="1" height="1" fill="#000000"/><rect x="11" y="4" width="2" height="1" fill="#ffffff"/><rect x="13" y="4" width="1" height="1" fill="#000000"/><rect x="0" y="5" width="1" height="1" fill="#000000"/><rect x="1" y="5" width="8" height="1" fill="#66ccff"/><rect x="9" y="5" width="1" height="1" fill="#000000"/><rect x="10" y="5" width="4" height="1" fill="#ffffff"/><rect x="14" y="5" width="1" height="1" fill="#000000"/><rect x="0" y="6" width="1" height="1" fill="#000000"/><rect x="1" y="6" width="8" height="1" fill="#66ccff"/><rect x="9" y="6" width="1" height="1" fill="#000000"/><rect x="10" y="6" width="4" height="1" fill="#ffffff"/><rect x="14" y="6" width="1" height="1" fill="#000000"/><rect x="0" y="7" width="1" height="1" fill="#000000"/><rect x="1" y="7" width="8" height="1" fill="#66ccff"/><rect x="9" y="7" width="1" height="1" fill="#000000"/><rect x="10" y="7" width="2" height="1" fill="#ffffff"/><rect x="12" y="7" width="3" height="1" fill="#000000"/><rect x="0" y="8" width="1" height="1" fill="#000000"/><rect x="1" y="8" width="9" height="1" fill="#66ccff"/><rect x="10" y="8" width="1" height="1" fill="#000000"/><rect x="11" y="8" width="1" height="1" fill="#ffffff"/><rect x="12" y="8" width="3" height="1" fill="#000000"/><rect x="0" y="9" width="1" height="1" fill="#000000"/><rect x="1" y="9" width="13" height="1" fill="#66ccff"/><rect x="14" y="9" width="1" height="1" fill="#000000"/><rect x="1" y="10" width="1" height="1" fill="#000000"/><rect x="2" y="10" width="10" height="1" fill="#66ccff"/><rect x="12" y="10" width="1" height="1" fill="#c8c000"/><rect x="13" y="10" width="1" height="1" fill="#000000"/><rect x="1" y="11" width="1" height="1" fill="#000000"/><rect x="2" y="11" width="10" height="1" fill="#66ccff"/><rect x="12" y="11" width="1" height="1" fill="#c8c000"/><rect x="13" y="11" width="1" height="1" fill="#000000"/><rect x="2" y="12" width="1" height="1" fill="#000000"/><rect x="3" y="12" width="4" height="1" fill="#66ccff"/><rect x="7" y="12" width="1" height="1" fill="#000000"/><rect x="8" y="12" width="2" height="1" fill="#c8c000"/><rect x="10" y="12" width="3" height="1" fill="#000000"/><rect x="3" y="13" width="2" height="1" fill="#000000"/><rect x="5" y="13" width="2" height="1" fill="#66ccff"/><rect x="7" y="13" width="1" height="1" fill="#c8c000"/><rect x="8" y="13" width="2" height="1" fill="#66ccff"/><rect x="10" y="13" width="2" height="1" fill="#000000"/><rect x="12" y="13" width="1" height="1" fill="#c8c000"/><rect x="5" y="14" width="6" height="1" fill="#000000"/><rect x="11" y="14" width="1" height="1" fill="#c8c000"/></svg>
<svg class="px" style="left:449px;top:194px" width="80" height="93" viewBox="0 0 15 21" preserveAspectRatio="none"><rect x="5" y="0" width="5" height="1" fill="#000000"/><rect x="3" y="1" width="2" height="1" fill="#000000"/><rect x="5" y="1" width="5" height="1" fill="#ffff00"/><rect x="10" y="1" width="2" height="1" fill="#000000"/><rect x="2" y="2" width="1" height="1" fill="#000000"/><rect x="3" y="2" width="9" height="1" fill="#ffff00"/><rect x="12" y="2" width="1" height="1" fill="#000000"/><rect x="1" y="3" width="1" height="1" fill="#000000"/><rect x="2" y="3" width="11" height="1" fill="#ffff00"/><rect x="13" y="3" width="1" height="1" fill="#000000"/><rect x="1" y="4" width="1" height="1" fill="#000000"/><rect x="2" y="4" width="1" height="1" fill="#ffff00"/><rect x="3" y="4" width="2" height="1" fill="#000000"/><rect x="5" y="4" width="3" height="1" fill="#ffff00"/><rect x="8" y="4" width="2" height="1" fill="#000000"/><rect x="10" y="4" width="3" height="1" fill="#ffff00"/><rect x="13" y="4" width="1" height="1" fill="#000000"/><rect x="0" y="5" width="1" height="1" fill="#000000"/><rect x="1" y="5" width="2" height="1" fill="#ffff00"/><rect x="3" y="5" width="2" height="1" fill="#000000"/><rect x="5" y="5" width="3" height="1" fill="#ffff00"/><rect x="8" y="5" width="2" height="1" fill="#000000"/><rect x="10" y="5" width="4" height="1" fill="#ffff00"/><rect x="14" y="5" width="1" height="1" fill="#000000"/><rect x="0" y="6" width="1" height="1" fill="#000000"/><rect x="1" y="6" width="13" height="1" fill="#ffff00"/><rect x="14" y="6" width="1" height="1" fill="#000000"/><rect x="0" y="7" width="1" height="1" fill="#000000"/><rect x="1" y="7" width="13" height="1" fill="#ffff00"/><rect x="14" y="7" width="1" height="1" fill="#000000"/><rect x="0" y="8" width="1" height="1" fill="#000000"/><rect x="1" y="8" width="13" height="1" fill="#ffff00"/><rect x="14" y="8" width="1" height="1" fill="#000000"/><rect x="0" y="9" width="1" height="1" fill="#000000"/><rect x="1" y="9" width="1" height="1" fill="#ffff00"/><rect x="2" y="9" width="1" height="1" fill="#000000"/><rect x="3" y="9" width="7" height="1" fill="#ffff00"/><rect x="10" y="9" width="1" height="1" fill="#000000"/><rect x="11" y="9" width="3" height="1" fill="#ffff00"/><rect x="14" y="9" width="1" height="1" fill="#000000"/><rect x="1" y="10" width="1" height="1" fill="#000000"/><rect x="2" y="10" width="1" height="1" fill="#ffff00"/><rect x="3" y="10" width="1" height="1" fill="#000000"/><rect x="4" y="10" width="5" height="1" fill="#ffff00"/><rect x="9" y="10" width="1" height="1" fill="#000000"/><rect x="10" y="10" width="3" height="1" fill="#ffff00"/><rect x="13" y="10" width="1" height="1" fill="#000000"/><rect x="1" y="11" width="1" height="1" fill="#000000"/><rect x="2" y="11" width="2" height="1" fill="#ffff00"/><rect x="4" y="11" width="5" height="1" fill="#000000"/><rect x="9" y="11" width="4" height="1" fill="#ffff00"/><rect x="13" y="11" width="1" height="1" fill="#000000"/><rect x="2" y="12" width="1" height="1" fill="#000000"/><rect x="3" y="12" width="9" height="1" fill="#ffff00"/><rect x="12" y="12" width="1" height="1" fill="#000000"/><rect x="3" y="13" width="2" height="1" fill="#000000"/><rect x="5" y="13" width="5" height="1" fill="#ffff00"/><rect x="10" y="13" width="2" height="1" fill="#000000"/><rect x="1" y="14" width="2" height="1" fill="#000000"/><rect x="5" y="14" width="5" height="1" fill="#000000"/><rect x="12" y="14" width="2" height="1" fill="#000000"/><rect x="1" y="15" width="3" height="1" fill="#000000"/><rect x="11" y="15" width="3" height="1" fill="#000000"/><rect x="1" y="16" width="4" height="1" fill="#000000"/><rect x="6" y="16" width="3" height="1" fill="#000000"/><rect x="10" y="16" width="4" height="1" fill="#000000"/><rect x="1" y="17" width="4" height="1" fill="#000000"/><rect x="6" y="17" width="3" height="1" fill="#000000"/><rect x="10" y="17" width="4" height="1" fill="#000000"/><rect x="1" y="18" width="4" height="1" fill="#000000"/><rect x="6" y="18" width="3" height="1" fill="#000000"/><rect x="10" y="18" width="4" height="1" fill="#000000"/><rect x="1" y="19" width="3" height="1" fill="#000000"/><rect x="11" y="19" width="3" height="1" fill="#000000"/><rect x="1" y="20" width="2" height="1" fill="#000000"/><rect x="12" y="20" width="2" height="1" fill="#000000"/></svg>
<svg class="px" style="left:727px;top:171px" width="94" height="149" viewBox="0 0 14 24" preserveAspectRatio="none"><rect x="8" y="0" width="1" height="1" fill="#c8b050"/><rect x="9" y="0" width="1" height="1" fill="#a09048"/><rect x="6" y="1" width="1" height="1" fill="#c8b050"/><rect x="7" y="1" width="1" height="1" fill="#a09048"/><rect x="8" y="1" width="1" height="1" fill="#ffe680"/><rect x="9" y="1" width="1" height="1" fill="#a09048"/><rect x="10" y="1" width="1" height="1" fill="#c8b050"/><rect x="11" y="1" width="1" height="1" fill="#988838"/><rect x="6" y="2" width="1" height="1" fill="#ffe680"/><rect x="7" y="2" width="1" height="1" fill="#a09048"/><rect x="8" y="2" width="1" height="1" fill="#ffe680"/><rect x="9" y="2" width="1" height="1" fill="#988838"/><rect x="10" y="2" width="1" height="1" fill="#ffe680"/><rect x="11" y="2" width="1" height="1" fill="#a09048"/><rect x="12" y="2" width="1" height="1" fill="#c8b050"/><rect x="13" y="2" width="1" height="1" fill="#a09048"/><rect x="6" y="3" width="1" height="1" fill="#ffe680"/><rect x="7" y="3" width="1" height="1" fill="#a09048"/><rect x="8" y="3" width="1" height="1" fill="#ffe680"/><rect x="9" y="3" width="1" height="1" fill="#a09048"/><rect x="10" y="3" width="1" height="1" fill="#ffe680"/><rect x="11" y="3" width="1" height="1" fill="#a09048"/><rect x="12" y="3" width="1" height="1" fill="#ffe680"/><rect x="13" y="3" width="1" height="1" fill="#988838"/><rect x="6" y="4" width="1" height="1" fill="#ffe680"/><rect x="7" y="4" width="1" height="1" fill="#a09048"/><rect x="8" y="4" width="1" height="1" fill="#ffe680"/><rect x="9" y="4" width="1" height="1" fill="#a09048"/><rect x="10" y="4" width="1" height="1" fill="#ffe680"/><rect x="11" y="4" width="1" height="1" fill="#a09048"/><rect x="12" y="4" width="1" height="1" fill="#ffe680"/><rect x="13" y="4" width="1" height="1" fill="#a09048"/><rect x="6" y="5" width="1" height="1" fill="#ffe680"/><rect x="7" y="5" width="1" height="1" fill="#988838"/><rect x="8" y="5" width="1" height="1" fill="#c0a850"/><rect x="9" y="5" width="1" height="1" fill="#c8b060"/><rect x="10" y="5" width="1" height="1" fill="#c0a850"/><rect x="11" y="5" width="1" height="1" fill="#a89850"/><rect x="12" y="5" width="1" height="1" fill="#ffe680"/><rect x="13" y="5" width="1" height="1" fill="#a09048"/><rect x="6" y="6" width="1" height="1" fill="#ffe680"/><rect x="7" y="6" width="1" height="1" fill="#a89850"/><rect x="8" y="6" width="1" height="1" fill="#c0a850"/><rect x="9" y="6" width="1" height="1" fill="#c8b050"/><rect x="10" y="6" width="1" height="1" fill="#c0a850"/><rect x="11" y="6" width="1" height="1" fill="#a09048"/><rect x="12" y="6" width="1" height="1" fill="#988838"/><rect x="13" y="6" width="1" height="1" fill="#a89850"/><rect x="6" y="7" width="1" height="1" fill="#ffe680"/><rect x="7" y="7" width="1" height="1" fill="#d0b848"/><rect x="8" y="7" width="1" height="1" fill="#c8b050"/><rect x="9" y="7" width="1" height="1" fill="#d0b848"/><rect x="10" y="7" width="1" height="1" fill="#c8b060"/><rect x="11" y="7" width="1" height="1" fill="#a09048"/><rect x="12" y="7" width="1" height="1" fill="#d0b848"/><rect x="13" y="7" width="1" height="1" fill="#c8b060"/><rect x="6" y="8" width="1" height="1" fill="#a89850"/><rect x="7" y="8" width="1" height="1" fill="#d0b848"/><rect x="8" y="8" width="1" height="1" fill="#c8b050"/><rect x="9" y="8" width="1" height="1" fill="#ffe680"/><rect x="10" y="8" width="1" height="1" fill="#c8b060"/><rect x="11" y="8" width="3" height="1" fill="#a09048"/><rect x="6" y="9" width="1" height="1" fill="#ffe680"/><rect x="7" y="9" width="1" height="1" fill="#c8b050"/><rect x="8" y="9" width="1" height="1" fill="#ffe680"/><rect x="9" y="9" width="1" height="1" fill="#a09048"/><rect x="10" y="9" width="1" height="1" fill="#a89850"/><rect x="11" y="9" width="1" height="1" fill="#d0b848"/><rect x="12" y="9" width="1" height="1" fill="#a09048"/><rect x="13" y="9" width="1" height="1" fill="#988028"/><rect x="6" y="10" width="1" height="1" fill="#ffe680"/><rect x="7" y="10" width="1" height="1" fill="#a89850"/><rect x="8" y="10" width="1" height="1" fill="#ffe680"/><rect x="9" y="10" width="1" height="1" fill="#d0b848"/><rect x="10" y="10" width="1" height="1" fill="#c8b050"/><rect x="11" y="10" width="1" height="1" fill="#d0b848"/><rect x="12" y="10" width="1" height="1" fill="#a09048"/><rect x="13" y="10" width="1" height="1" fill="#988028"/><rect x="6" y="11" width="1" height="1" fill="#ffe680"/><rect x="7" y="11" width="1" height="1" fill="#ffe670"/><rect x="8" y="11" width="1" height="1" fill="#a89850"/><rect x="9" y="11" width="2" height="1" fill="#a09048"/><rect x="11" y="11" width="1" height="1" fill="#d0b848"/><rect x="12" y="11" width="1" height="1" fill="#a09048"/><rect x="13" y="11" width="1" height="1" fill="#706018"/><rect x="1" y="12" width="1" height="1" fill="#c0b068"/><rect x="2" y="12" width="1" height="1" fill="#e8d070"/><rect x="3" y="12" width="1" height="1" fill="#c0b068"/><rect x="6" y="12" width="1" height="1" fill="#ffe680"/><rect x="7" y="12" width="1" height="1" fill="#c0b068"/><rect x="8" y="12" width="1" height="1" fill="#ffe670"/><rect x="9" y="12" width="1" height="1" fill="#c8b050"/><rect x="10" y="12" width="2" height="1" fill="#a09048"/><rect x="12" y="12" width="1" height="1" fill="#988028"/><rect x="13" y="12" width="1" height="1" fill="#706018"/><rect x="1" y="13" width="1" height="1" fill="#e8d070"/><rect x="2" y="13" width="2" height="1" fill="#ffe680"/><rect x="4" y="13" width="2" height="1" fill="#e8d070"/><rect x="6" y="13" width="1" height="1" fill="#c0b068"/><rect x="7" y="13" width="1" height="1" fill="#807038"/><rect x="8" y="13" width="1" height="1" fill="#e8d070"/><rect x="9" y="13" width="1" height="1" fill="#ffe670"/><rect x="10" y="13" width="1" height="1" fill="#d8c050"/><rect x="11" y="13" width="2" height="1" fill="#907820"/><rect x="13" y="13" width="1" height="1" fill="#706018"/><rect x="1" y="14" width="1" height="1" fill="#a09048"/><rect x="2" y="14" width="3" height="1" fill="#c8b050"/><rect x="5" y="14" width="1" height="1" fill="#d8c050"/><rect x="6" y="14" width="1" height="1" fill="#ffe670"/><rect x="7" y="14" width="1" height="1" fill="#e8d070"/><rect x="8" y="14" width="2" height="1" fill="#ffe680"/><rect x="10" y="14" width="1" height="1" fill="#d8c050"/><rect x="11" y="14" width="1" height="1" fill="#c0a850"/><rect x="12" y="14" width="1" height="1" fill="#988028"/><rect x="5" y="15" width="1" height="1" fill="#a09048"/><rect x="6" y="15" width="1" height="1" fill="#d8c050"/><rect x="7" y="15" width="2" height="1" fill="#ffe680"/><rect x="9" y="15" width="1" height="1" fill="#ffe670"/><rect x="10" y="15" width="1" height="1" fill="#d8c050"/><rect x="11" y="15" width="1" height="1" fill="#c0a850"/><rect x="12" y="15" width="1" height="1" fill="#907820"/><rect x="6" y="16" width="1" height="1" fill="#a09048"/><rect x="7" y="16" width="1" height="1" fill="#ffe680"/><rect x="8" y="16" width="1" height="1" fill="#ffe670"/><rect x="9" y="16" width="1" height="1" fill="#e8d070"/><rect x="10" y="16" width="1" height="1" fill="#c8b050"/><rect x="11" y="16" width="1" height="1" fill="#988028"/><rect x="7" y="17" width="1" height="1" fill="#e8d070"/><rect x="8" y="17" width="1" height="1" fill="#d8c050"/><rect x="9" y="17" width="1" height="1" fill="#c8b050"/><rect x="10" y="17" width="1" height="1" fill="#a09048"/><rect x="11" y="17" width="1" height="1" fill="#907820"/><rect x="8" y="18" width="1" height="1" fill="#a09048"/><rect x="9" y="18" width="1" height="1" fill="#ffe680"/><rect x="10" y="18" width="1" height="1" fill="#a09048"/><rect x="8" y="19" width="1" height="1" fill="#d0b848"/><rect x="9" y="19" width="1" height="1" fill="#ffe680"/><rect x="7" y="20" width="1" height="1" fill="#d0b848"/><rect x="8" y="20" width="1" height="1" fill="#ffe680"/><rect x="9" y="20" width="1" height="1" fill="#a09048"/><rect x="3" y="21" width="1" height="1" fill="#706018"/><rect x="4" y="21" width="1" height="1" fill="#ffe680"/><rect x="5" y="21" width="1" height="1" fill="#706018"/><rect x="6" y="21" width="2" height="1" fill="#ffe680"/><rect x="8" y="21" width="1" height="1" fill="#a09048"/><rect x="1" y="22" width="2" height="1" fill="#706018"/><rect x="3" y="22" width="1" height="1" fill="#ffe680"/><rect x="4" y="22" width="1" height="1" fill="#c8b050"/><rect x="5" y="22" width="1" height="1" fill="#d0b848"/><rect x="6" y="22" width="1" height="1" fill="#c8b050"/><rect x="7" y="22" width="1" height="1" fill="#988028"/><rect x="0" y="23" width="1" height="1" fill="#d0b848"/><rect x="1" y="23" width="1" height="1" fill="#c8b050"/><rect x="2" y="23" width="1" height="1" fill="#988028"/><rect x="3" y="23" width="1" height="1" fill="#c8b050"/><rect x="4" y="23" width="1" height="1" fill="#d0b848"/></svg>
<svg class="px" style="left:633px;top:252px" width="101" height="93" viewBox="0 0 15 15" preserveAspectRatio="none"><rect x="5" y="0" width="5" height="1" fill="#000000"/><rect x="3" y="1" width="2" height="1" fill="#000000"/><rect x="5" y="1" width="5" height="1" fill="#ffff00"/><rect x="10" y="1" width="2" height="1" fill="#000000"/><rect x="2" y="2" width="1" height="1" fill="#000000"/><rect x="3" y="2" width="9" height="1" fill="#ffff00"/><rect x="12" y="2" width="1" height="1" fill="#000000"/><rect x="1" y="3" width="1" height="1" fill="#000000"/><rect x="2" y="3" width="11" height="1" fill="#ffff00"/><rect x="13" y="3" width="1" height="1" fill="#000000"/><rect x="1" y="4" width="1" height="1" fill="#000000"/><rect x="2" y="4" width="2" height="1" fill="#ffff00"/><rect x="4" y="4" width="2" height="1" fill="#000000"/><rect x="6" y="4" width="3" height="1" fill="#ffff00"/><rect x="9" y="4" width="2" height="1" fill="#000000"/><rect x="11" y="4" width="2" height="1" fill="#ffff00"/><rect x="13" y="4" width="1" height="1" fill="#000000"/><rect x="0" y="5" width="1" height="1" fill="#000000"/><rect x="1" y="5" width="3" height="1" fill="#ffff00"/><rect x="4" y="5" width="2" height="1" fill="#000000"/><rect x="6" y="5" width="3" height="1" fill="#ffff00"/><rect x="9" y="5" width="2" height="1" fill="#000000"/><rect x="11" y="5" width="3" height="1" fill="#ffff00"/><rect x="14" y="5" width="1" height="1" fill="#000000"/><rect x="0" y="6" width="1" height="1" fill="#000000"/><rect x="1" y="6" width="13" height="1" fill="#ffff00"/><rect x="14" y="6" width="1" height="1" fill="#000000"/><rect x="0" y="7" width="1" height="1" fill="#000000"/><rect x="1" y="7" width="13" height="1" fill="#ffff00"/><rect x="14" y="7" width="1" height="1" fill="#000000"/><rect x="0" y="8" width="1" height="1" fill="#000000"/><rect x="1" y="8" width="13" height="1" fill="#ffff00"/><rect x="14" y="8" width="1" height="1" fill="#000000"/><rect x="0" y="9" width="1" height="1" fill="#000000"/><rect x="1" y="9" width="2" height="1" fill="#ffff00"/><rect x="3" y="9" width="1" height="1" fill="#000000"/><rect x="4" y="9" width="7" height="1" fill="#ffff00"/><rect x="11" y="9" width="1" height="1" fill="#000000"/><rect x="12" y="9" width="2" height="1" fill="#ffff00"/><rect x="14" y="9" width="1" height="1" fill="#000000"/><rect x="1" y="10" width="1" height="1" fill="#000000"/><rect x="2" y="10" width="2" height="1" fill="#ffff00"/><rect x="4" y="10" width="1" height="1" fill="#000000"/><rect x="5" y="10" width="5" height="1" fill="#ffff00"/><rect x="10" y="10" width="1" height="1" fill="#000000"/><rect x="11" y="10" width="2" height="1" fill="#ffff00"/><rect x="13" y="10" width="1" height="1" fill="#000000"/><rect x="1" y="11" width="1" height="1" fill="#000000"/><rect x="2" y="11" width="3" height="1" fill="#ffff00"/><rect x="5" y="11" width="5" height="1" fill="#000000"/><rect x="10" y="11" width="3" height="1" fill="#ffff00"/><rect x="13" y="11" width="1" height="1" fill="#000000"/><rect x="2" y="12" width="1" height="1" fill="#000000"/><rect x="3" y="12" width="9" height="1" fill="#ffff00"/><rect x="12" y="12" width="1" height="1" fill="#000000"/><rect x="3" y="13" width="2" height="1" fill="#000000"/><rect x="5" y="13" width="5" height="1" fill="#ffff00"/><rect x="10" y="13" width="2" height="1" fill="#000000"/><rect x="5" y="14" width="5" height="1" fill="#000000"/></svg>
<svg class="px" style="left:202px;top:321px" width="116" height="116" viewBox="0 0 15 15" preserveAspectRatio="none"><rect x="5" y="0" width="5" height="1" fill="#000000"/><rect x="3" y="1" width="2" height="1" fill="#000000"/><rect x="5" y="1" width="5" height="1" fill="#ccff00"/><rect x="10" y="1" width="2" height="1" fill="#000000"/><rect x="2" y="2" width="1" height="1" fill="#000000"/><rect x="3" y="2" width="9" height="1" fill="#ccff00"/><rect x="12" y="2" width="1" height="1" fill="#000000"/><rect x="1" y="3" width="1" height="1" fill="#000000"/><rect x="2" y="3" width="11" height="1" fill="#ccff00"/><rect x="13" y="3" width="1" height="1" fill="#000000"/><rect x="1" y="4" width="1" height="1" fill="#000000"/><rect x="2" y="4" width="2" height="1" fill="#ccff00"/><rect x="4" y="4" width="2" height="1" fill="#000000"/><rect x="6" y="4" width="3" height="1" fill="#ccff00"/><rect x="9" y="4" width="2" height="1" fill="#000000"/><rect x="11" y="4" width="2" height="1" fill="#ccff00"/><rect x="13" y="4" width="1" height="1" fill="#000000"/><rect x="0" y="5" width="1" height="1" fill="#000000"/><rect x="1" y="5" width="3" height="1" fill="#ccff00"/><rect x="4" y="5" width="2" height="1" fill="#000000"/><rect x="6" y="5" width="3" height="1" fill="#ccff00"/><rect x="9" y="5" width="2" height="1" fill="#000000"/><rect x="11" y="5" width="3" height="1" fill="#ccff00"/><rect x="14" y="5" width="1" height="1" fill="#000000"/><rect x="0" y="6" width="1" height="1" fill="#000000"/><rect x="1" y="6" width="13" height="1" fill="#ccff00"/><rect x="14" y="6" width="1" height="1" fill="#000000"/><rect x="0" y="7" width="1" height="1" fill="#000000"/><rect x="1" y="7" width="13" height="1" fill="#ccff00"/><rect x="14" y="7" width="1" height="1" fill="#000000"/><rect x="0" y="8" width="1" height="1" fill="#000000"/><rect x="1" y="8" width="1" height="1" fill="#ccff00"/><rect x="2" y="8" width="1" height="1" fill="#000000"/><rect x="3" y="8" width="9" height="1" fill="#ccff00"/><rect x="12" y="8" width="1" height="1" fill="#000000"/><rect x="13" y="8" width="1" height="1" fill="#ccff00"/><rect x="14" y="8" width="1" height="1" fill="#000000"/><rect x="0" y="9" width="1" height="1" fill="#000000"/><rect x="1" y="9" width="2" height="1" fill="#ccff00"/><rect x="3" y="9" width="9" height="1" fill="#000000"/><rect x="12" y="9" width="2" height="1" fill="#ccff00"/><rect x="14" y="9" width="1" height="1" fill="#000000"/><rect x="1" y="10" width="1" height="1" fill="#000000"/><rect x="2" y="10" width="11" height="1" fill="#ccff00"/><rect x="13" y="10" width="1" height="1" fill="#000000"/><rect x="1" y="11" width="1" height="1" fill="#000000"/><rect x="2" y="11" width="11" height="1" fill="#ccff00"/><rect x="13" y="11" width="1" height="1" fill="#000000"/><rect x="2" y="12" width="1" height="1" fill="#000000"/><rect x="3" y="12" width="9" height="1" fill="#ccff00"/><rect x="12" y="12" width="1" height="1" fill="#000000"/><rect x="3" y="13" width="2" height="1" fill="#000000"/><rect x="5" y="13" width="5" height="1" fill="#ccff00"/><rect x="10" y="13" width="2" height="1" fill="#000000"/><rect x="5" y="14" width="5" height="1" fill="#000000"/></svg>
<svg class="px" style="left:702px;top:361px" width="128" height="118" viewBox="0 0 15 15" preserveAspectRatio="none"><rect x="5" y="0" width="5" height="1" fill="#000000"/><rect x="3" y="1" width="2" height="1" fill="#000000"/><rect x="5" y="1" width="5" height="1" fill="#ffff00"/><rect x="10" y="1" width="2" height="1" fill="#000000"/><rect x="2" y="2" width="1" height="1" fill="#000000"/><rect x="3" y="2" width="9" height="1" fill="#ffff00"/><rect x="12" y="2" width="1" height="1" fill="#000000"/><rect x="1" y="3" width="1" height="1" fill="#000000"/><rect x="2" y="3" width="11" height="1" fill="#ffff00"/><rect x="13" y="3" width="1" height="1" fill="#000000"/><rect x="1" y="4" width="1" height="1" fill="#000000"/><rect x="2" y="4" width="11" height="1" fill="#ffff00"/><rect x="13" y="4" width="1" height="1" fill="#000000"/><rect x="0" y="5" width="1" height="1" fill="#000000"/><rect x="1" y="5" width="13" height="1" fill="#ffff00"/><rect x="14" y="5" width="1" height="1" fill="#000000"/><rect x="0" y="6" width="1" height="1" fill="#000000"/><rect x="1" y="6" width="13" height="1" fill="#ffff00"/><rect x="14" y="6" width="1" height="1" fill="#000000"/><rect x="0" y="7" width="1" height="1" fill="#000000"/><rect x="1" y="7" width="13" height="1" fill="#ffff00"/><rect x="14" y="7" width="1" height="1" fill="#000000"/><rect x="0" y="8" width="1" height="1" fill="#000000"/><rect x="1" y="8" width="13" height="1" fill="#ffff00"/><rect x="14" y="8" width="1" height="1" fill="#000000"/><rect x="0" y="9" width="1" height="1" fill="#000000"/><rect x="1" y="9" width="13" height="1" fill="#ffff00"/><rect x="14" y="9" width="1" height="1" fill="#000000"/><rect x="1" y="10" width="1" height="1" fill="#000000"/><rect x="2" y="10" width="11" height="1" fill="#ffff00"/><rect x="13" y="10" width="1" height="1" fill="#000000"/><rect x="1" y="11" width="1" height="1" fill="#000000"/><rect x="2" y="11" width="11" height="1" fill="#ffff00"/><rect x="13" y="11" width="1" height="1" fill="#000000"/><rect x="2" y="12" width="1" height="1" fill="#000000"/><rect x="3" y="12" width="9" height="1" fill="#ffff00"/><rect x="12" y="12" width="1" height="1" fill="#000000"/><rect x="3" y="13" width="2" height="1" fill="#000000"/><rect x="5" y="13" width="5" height="1" fill="#ffff00"/><rect x="10" y="13" width="2" height="1" fill="#000000"/><rect x="5" y="14" width="5" height="1" fill="#000000"/><rect x="4.1" y="3.19" width="1.93" height="0.87" fill="#000"/><rect x="8.97" y="3.19" width="1.93" height="0.87" fill="#000"/><rect x="3.15" y="4.06" width="0.9" height="0.97" fill="#000"/><rect x="6.13" y="4.06" width="0.9" height="0.97" fill="#000"/><rect x="7.98" y="4.06" width="0.93" height="0.97" fill="#000"/><rect x="10.99" y="4.06" width="0.84" height="0.97" fill="#000"/><rect x="3.05" y="5.03" width="0.06" height="0.95" fill="#000"/><rect x="3.05" y="5.9" width="0.96" height="0.08" fill="#000"/><rect x="6.03" y="5.03" width="0.06" height="0.95" fill="#000"/><rect x="6.03" y="5.9" width="1.0" height="0.08" fill="#000"/><rect x="8.93" y="5.03" width="0.06" height="0.95" fill="#000"/><rect x="7.98" y="5.9" width="1.0" height="0.08" fill="#000"/><rect x="11.86" y="5.03" width="0.06" height="0.95" fill="#000"/><rect x="10.99" y="5.9" width="0.93" height="0.08" fill="#000"/><rect x="3.15" y="7.77" width="8.68" height="0.86" fill="#000"/><rect x="3.05" y="9.02" width="8.9" height="1.02" fill="#000"/><rect x="4.0" y="10.04" width="6.99" height="0.97" fill="#000"/><rect x="5.04" y="11.0" width="4.92" height="1.0" fill="#000"/></svg>
<svg class="px" style="left:455px;top:470px" width="122" height="122" viewBox="0 0 15 15" preserveAspectRatio="none"><rect x="5" y="0" width="5" height="1" fill="#000000"/><rect x="3" y="1" width="2" height="1" fill="#000000"/><rect x="5" y="1" width="5" height="1" fill="#ffff00"/><rect x="10" y="1" width="2" height="1" fill="#000000"/><rect x="2" y="2" width="1" height="1" fill="#000000"/><rect x="3" y="2" width="9" height="1" fill="#ffff00"/><rect x="12" y="2" width="1" height="1" fill="#000000"/><rect x="1" y="3" width="1" height="1" fill="#000000"/><rect x="2" y="3" width="11" height="1" fill="#ffff00"/><rect x="13" y="3" width="1" height="1" fill="#000000"/><rect x="1" y="4" width="1" height="1" fill="#000000"/><rect x="2" y="4" width="11" height="1" fill="#ffff00"/><rect x="13" y="4" width="1" height="1" fill="#000000"/><rect x="0" y="5" width="1" height="1" fill="#000000"/><rect x="1" y="5" width="4" height="1" fill="#ffff00"/><rect x="5" y="5" width="2" height="1" fill="#000000"/><rect x="7" y="5" width="1" height="1" fill="#ffff00"/><rect x="8" y="5" width="2" height="1" fill="#000000"/><rect x="10" y="5" width="4" height="1" fill="#ffff00"/><rect x="14" y="5" width="1" height="1" fill="#000000"/><rect x="0" y="6" width="1" height="1" fill="#000000"/><rect x="1" y="6" width="4" height="1" fill="#ffff00"/><rect x="5" y="6" width="2" height="1" fill="#000000"/><rect x="7" y="6" width="1" height="1" fill="#ffff00"/><rect x="8" y="6" width="2" height="1" fill="#000000"/><rect x="10" y="6" width="4" height="1" fill="#ffff00"/><rect x="14" y="6" width="1" height="1" fill="#000000"/><rect x="0" y="7" width="1" height="1" fill="#000000"/><rect x="1" y="7" width="13" height="1" fill="#ffff00"/><rect x="14" y="7" width="1" height="1" fill="#000000"/><rect x="0" y="8" width="1" height="1" fill="#000000"/><rect x="1" y="8" width="13" height="1" fill="#ffff00"/><rect x="14" y="8" width="1" height="1" fill="#000000"/><rect x="0" y="9" width="1" height="1" fill="#000000"/><rect x="1" y="9" width="2" height="1" fill="#ffff00"/><rect x="3" y="9" width="1" height="1" fill="#000000"/><rect x="4" y="9" width="7" height="1" fill="#ffff00"/><rect x="11" y="9" width="1" height="1" fill="#000000"/><rect x="12" y="9" width="2" height="1" fill="#ffff00"/><rect x="14" y="9" width="1" height="1" fill="#000000"/><rect x="1" y="10" width="1" height="1" fill="#000000"/><rect x="2" y="10" width="2" height="1" fill="#ffff00"/><rect x="4" y="10" width="1" height="1" fill="#000000"/><rect x="5" y="10" width="5" height="1" fill="#ffff00"/><rect x="10" y="10" width="1" height="1" fill="#000000"/><rect x="11" y="10" width="2" height="1" fill="#ffff00"/><rect x="13" y="10" width="1" height="1" fill="#000000"/><rect x="1" y="11" width="1" height="1" fill="#000000"/><rect x="2" y="11" width="3" height="1" fill="#ffff00"/><rect x="5" y="11" width="5" height="1" fill="#000000"/><rect x="10" y="11" width="3" height="1" fill="#ffff00"/><rect x="13" y="11" width="1" height="1" fill="#000000"/><rect x="2" y="12" width="1" height="1" fill="#000000"/><rect x="3" y="12" width="9" height="1" fill="#ffff00"/><rect x="12" y="12" width="1" height="1" fill="#000000"/><rect x="3" y="13" width="2" height="1" fill="#000000"/><rect x="5" y="13" width="5" height="1" fill="#ffff00"/><rect x="10" y="13" width="2" height="1" fill="#000000"/><rect x="5" y="14" width="5" height="1" fill="#000000"/></svg>
<svg class="px" style="left:696px;top:516px" width="122" height="122" viewBox="0 0 15 15" preserveAspectRatio="none"><rect x="5" y="0" width="5" height="1" fill="#000000"/><rect x="3" y="1" width="2" height="1" fill="#000000"/><rect x="5" y="1" width="5" height="1" fill="#ea6a88"/><rect x="10" y="1" width="2" height="1" fill="#000000"/><rect x="2" y="2" width="1" height="1" fill="#000000"/><rect x="3" y="2" width="9" height="1" fill="#ea6a88"/><rect x="12" y="2" width="1" height="1" fill="#000000"/><rect x="1" y="3" width="1" height="1" fill="#000000"/><rect x="2" y="3" width="2" height="1" fill="#ea6a88"/><rect x="4" y="3" width="1" height="1" fill="#000000"/><rect x="5" y="3" width="5" height="1" fill="#ea6a88"/><rect x="10" y="3" width="1" height="1" fill="#000000"/><rect x="11" y="3" width="2" height="1" fill="#ea6a88"/><rect x="13" y="3" width="1" height="1" fill="#000000"/><rect x="1" y="4" width="1" height="1" fill="#000000"/><rect x="2" y="4" width="2" height="1" fill="#ea6a88"/><rect x="4" y="4" width="2" height="1" fill="#000000"/><rect x="6" y="4" width="3" height="1" fill="#ea6a88"/><rect x="9" y="4" width="2" height="1" fill="#000000"/><rect x="11" y="4" width="2" height="1" fill="#ea6a88"/><rect x="13" y="4" width="1" height="1" fill="#000000"/><rect x="0" y="5" width="1" height="1" fill="#000000"/><rect x="1" y="5" width="4" height="1" fill="#ea6a88"/><rect x="5" y="5" width="2" height="1" fill="#000000"/><rect x="7" y="5" width="1" height="1" fill="#ea6a88"/><rect x="8" y="5" width="2" height="1" fill="#000000"/><rect x="10" y="5" width="4" height="1" fill="#ea6a88"/><rect x="14" y="5" width="1" height="1" fill="#000000"/><rect x="0" y="6" width="1" height="1" fill="#000000"/><rect x="1" y="6" width="13" height="1" fill="#ea6a88"/><rect x="14" y="6" width="1" height="1" fill="#000000"/><rect x="0" y="7" width="1" height="1" fill="#000000"/><rect x="1" y="7" width="13" height="1" fill="#ea6a88"/><rect x="14" y="7" width="1" height="1" fill="#000000"/><rect x="0" y="8" width="1" height="1" fill="#000000"/><rect x="1" y="8" width="13" height="1" fill="#ea6a88"/><rect x="14" y="8" width="1" height="1" fill="#000000"/><rect x="0" y="9" width="1" height="1" fill="#000000"/><rect x="1" y="9" width="13" height="1" fill="#ea6a88"/><rect x="14" y="9" width="1" height="1" fill="#000000"/><rect x="1" y="10" width="1" height="1" fill="#000000"/><rect x="2" y="10" width="11" height="1" fill="#ea6a88"/><rect x="13" y="10" width="1" height="1" fill="#000000"/><rect x="1" y="11" width="1" height="1" fill="#000000"/><rect x="2" y="11" width="11" height="1" fill="#ea6a88"/><rect x="13" y="11" width="1" height="1" fill="#000000"/><rect x="2" y="12" width="1" height="1" fill="#000000"/><rect x="3" y="12" width="9" height="1" fill="#ea6a88"/><rect x="12" y="12" width="1" height="1" fill="#000000"/><rect x="3" y="13" width="2" height="1" fill="#000000"/><rect x="5" y="13" width="5" height="1" fill="#ea6a88"/><rect x="10" y="13" width="2" height="1" fill="#000000"/><rect x="5" y="14" width="5" height="1" fill="#000000"/><rect x="4.03" y="9.0" width="0.27" height="1.0" fill="#000"/><rect x="10.7" y="9.0" width="0.27" height="1.0" fill="#000"/><rect x="4.3" y="9.37" width="6.4" height="0.82" fill="#000"/><rect x="4.3" y="10.58" width="6.4" height="0.6" fill="#000"/><rect x="5.13" y="11.18" width="4.73" height="0.64" fill="#000"/><rect x="4.3" y="10.33" width="6.4" height="0.07" fill="#b03050"/></svg>
<svg style="left:254px;top:499px;overflow:hidden" width="112" height="116" viewBox="0 0 15 15" preserveAspectRatio="none"><defs><filter id="bl" x="-20%" y="-20%" width="140%" height="140%"><feGaussianBlur stdDeviation="0.27"/></filter></defs><g filter="url(#bl)"><rect x="-3" y="-3" width="21" height="21" fill="#000"/><rect x="0.68" y="0.68" width="13.64" height="13.64" fill="#ffff00"/><rect x="3.68" y="3.64" width="2.3" height="2.2" fill="#000"/><rect x="8.93" y="3.64" width="2.3" height="2.2" fill="#000"/><rect x="2.52" y="8.89" width="1.34" height="1.34" fill="#000"/><rect x="3.65" y="9.95" width="1.34" height="1.34" fill="#000"/><rect x="10.00" y="9.95" width="1.34" height="1.34" fill="#000"/><rect x="11.06" y="8.89" width="1.34" height="1.34" fill="#000"/><rect x="4.8" y="11.13" width="5.45" height="1.25" fill="#000"/></g></svg>
<div class="a" style="left:1005px;top:105px;width:19px;height:609px;background:#ece9d8;"></div>
<div class="a" style="left:1005px;top:105px;width:17px;height:1px;background:#716f64;"></div>
<div class="a" style="left:1005px;top:106px;width:17px;height:17px;box-sizing:border-box;background:#f6f5ef;border:1px solid;border-color:#716f64 #fff #fff #716f64;"></div>
<svg class="px" style="left:1009px;top:110px" width="10" height="10" viewBox="0 0 10 10"><rect x="0" y="0" width="10" height="10" fill="#a8a8a8"/><rect x="2" y="2" width="6" height="6" fill="#000"/><rect x="3" y="3" width="4" height="4" fill="#fff"/><rect x="5" y="5" width="2" height="2" fill="#d8d8d8"/></svg>
<div class="btn" style="left:1005px;top:124px;width:17px;height:16px;"></div>
<div class="btn" style="left:1005px;top:141px;width:17px;height:16px;"></div>
<div class="btn" style="left:1005px;top:158px;width:17px;height:16px;"></div>
<div class="btn" style="left:1005px;top:175px;width:17px;height:16px;"></div>
<div class="btn" style="left:1005px;top:192px;width:17px;height:16px;"></div>
<svg class="px" style="left:1009px;top:127px" width="10" height="10" viewBox="0 0 10 10"><rect x="0" y="1" width="1" height="1" fill="#000"/><rect x="2" y="1" width="7" height="1" fill="#000"/><rect x="0" y="3" width="1" height="1" fill="#000"/><rect x="2" y="3" width="7" height="1" fill="#000"/><rect x="0" y="5" width="1" height="1" fill="#000"/><rect x="2" y="5" width="7" height="1" fill="#000"/><rect x="0" y="7" width="1" height="1" fill="#000"/><rect x="2" y="7" width="7" height="1" fill="#000"/></svg>
<svg class="px" style="left:1009px;top:144px" width="10" height="10" viewBox="0 0 10 10"><rect x="0" y="0" width="4" height="4" fill="#000"/><rect x="1" y="1" width="2" height="2" fill="#fff"/><rect x="5" y="0" width="4" height="4" fill="#000"/><rect x="6" y="1" width="2" height="2" fill="#fff"/><rect x="0" y="5" width="4" height="4" fill="#000"/><rect x="1" y="6" width="2" height="2" fill="#fff"/><rect x="5" y="5" width="4" height="4" fill="#000"/><rect x="6" y="6" width="2" height="2" fill="#fff"/></svg>
<svg class="px" style="left:1009px;top:160px" width="10" height="12" viewBox="0 0 10 12"><rect x="0" y="0" width="10" height="12" fill="#c0c0c0"/><rect x="2.2" y="1.7" width="5.6" height="4" fill="#fff" stroke="#000" stroke-width="1.4"/><rect x="2" y="8" width="6" height="1" fill="#000"/><rect x="2" y="10" width="6" height="1" fill="#000"/></svg>
<svg class="px" style="left:1009px;top:178px" width="10" height="10" viewBox="0 0 10 10"><rect x="0.7" y="0.7" width="2.6" height="2.6" fill="#fff" stroke="#000" stroke-width="1.4"/><rect x="0.7" y="6" width="2.6" height="2.6" fill="#fff" stroke="#000" stroke-width="1.4"/><rect x="5.5" y="0.5" width="4" height="1.3" fill="#000"/><rect x="5.5" y="3" width="4" height="1.3" fill="#000"/><rect x="5.5" y="5.8" width="4" height="1.3" fill="#000"/><rect x="5.5" y="8.3" width="4" height="1.3" fill="#000"/></svg>
<svg class="px" style="left:1009px;top:194px" width="10" height="12" viewBox="0 0 10 12"><rect x="0" y="0" width="10" height="12" fill="#c0c0c0"/><rect x="2" y="2.7" width="6" height="5" fill="#fff" stroke="#000" stroke-width="1.4"/><rect x="4.3" y="0.5" width="1.4" height="2" fill="#000"/><rect x="4" y="4.5" width="2" height="1.5" fill="#000"/><path d="M5 8V10M5 9L2.5 11.5M5 9L7.5 11.5" stroke="#000" stroke-width="1"/></svg>
<div class="a" style="left:1005px;top:224px;width:17px;height:452px;background:#f4f3ea;"></div>
<div class="a" style="left:1005px;top:224px;width:1px;height:452px;background:#fbf9ee;"></div>
<div class="btn" style="left:1006px;top:208px;width:16px;height:16px;"></div>
<svg style="left:1010px;top:214px" width="7" height="4" viewBox="0 0 7 4"><path d="M0 4H7L3.5 0Z" fill="#000"/></svg>
<div class="btn" style="left:1006px;top:335px;width:16px;height:231px;"></div>
<div class="btn" style="left:1006px;top:675px;width:16px;height:17px;"></div>
<svg style="left:1010px;top:682px" width="7" height="4" viewBox="0 0 7 4"><path d="M0 0H7L3.5 4Z" fill="#000"/></svg>
<div class="a" style="left:1005px;top:692px;width:17px;height:4px;background:#000;"></div>
<div class="a" style="left:1022px;top:105px;width:2px;height:609px;background:#f4f3ee;"></div>
<div class="a" style="left:31px;top:696px;width:974px;height:18px;background:#ece9d8;"></div>
<div class="a" style="left:32px;top:696px;width:16px;height:17px;box-sizing:border-box;background:#f6f5ef;border:1px solid;border-color:#716f64 #fff #fff #716f64;"></div>
<div class="btn" style="left:49px;top:696px;width:16px;height:16px;"></div>
<div class="btn" style="left:65px;top:696px;width:16px;height:16px;"></div>
<div class="btn" style="left:82px;top:696px;width:16px;height:16px;"></div>
<div class="btn" style="left:99px;top:696px;width:16px;height:16px;"></div>
<div class="btn" style="left:116px;top:696px;width:16px;height:16px;"></div>
<div class="btn" style="left:133px;top:696px;width:16px;height:16px;"></div>
<svg class="px" style="left:35px;top:700px" width="10" height="10" viewBox="0 0 10 10"><rect x="0" y="0" width="10" height="10" fill="#c4c4c4"/><rect x="1" y="1" width="5" height="6" fill="#000"/><rect x="2" y="2" width="3" height="4" fill="#fff"/><rect x="4" y="3" width="5" height="6" fill="#000"/><rect x="5" y="4" width="3" height="4" fill="#fff"/></svg>
<svg class="px" style="left:51px;top:700px" width="10" height="10" viewBox="0 0 10 10"><rect x="0" y="0" width="10" height="10" fill="#c4c4c4"/><rect x="2" y="1" width="6" height="7" fill="#000"/><rect x="3" y="2" width="4" height="5" fill="#e4e4e4"/><rect x="3" y="5" width="4" height="2" fill="#b8b8b8"/></svg>
<svg class="px" style="left:68px;top:700px" width="10" height="9" viewBox="0 0 10 9"><rect x="0" y="0" width="10" height="9" fill="#c0c0c0"/><path d="M1 8.5V1H9M3.5 8.5V3.5H9" stroke="#000" stroke-width="1.4" fill="none"/><rect x="7" y="6.5" width="2" height="2" fill="#000"/></svg>
<svg style="left:86px;top:700px" width="7" height="8" viewBox="0 0 7 8"><rect x="0" y="0" width="1.5" height="8" fill="#aca899"/><path d="M7 0V8L2 4Z" fill="#aca899"/></svg>
<svg style="left:104px;top:700px" width="5" height="8" viewBox="0 0 5 8"><path d="M5 0V8L0 4Z" fill="#aca899"/></svg>
<svg style="left:122px;top:700px" width="5" height="8" viewBox="0 0 5 8"><path d="M0 0V8L5 4Z" fill="#aca899"/></svg>
<svg style="left:137px;top:700px" width="7" height="8" viewBox="0 0 7 8"><rect x="5.5" y="0" width="1.5" height="8" fill="#aca899"/><path d="M0 0V8L5 4Z" fill="#aca899"/></svg>
<svg style="left:150px;top:696px" width="66" height="17" viewBox="0 0 66 17"><path d="M0.5 0H65L58 15.5H7.5Z" fill="#fff"/><path d="M0.5 0L7.5 15.5H58L65 0" stroke="#55524a" stroke-width="1" fill="none"/></svg>
<div class="t tab" style="left:158.5px;top:698.7px;font-weight:bold;letter-spacing:0.05px;">Слайд 1</div>
<div class="btn" style="left:425px;top:697px;width:6px;height:16px;"></div>
<div class="a" style="left:448px;top:696px;width:537px;height:17px;background:#f4f3ea;"></div>
<div class="a" style="left:448px;top:696px;width:537px;height:1px;background:#fbf9ee;"></div>
<div class="btn" style="left:432px;top:697px;width:16px;height:16px;"></div>
<svg style="left:438px;top:701px" width="4" height="7" viewBox="0 0 4 7"><path d="M4 0V7L0 3.5Z" fill="#000"/></svg>
<div class="btn" style="left:602px;top:697px;width:229px;height:16px;"></div>
<div class="btn" style="left:984px;top:697px;width:17px;height:16px;"></div>
<svg style="left:991px;top:701px" width="4" height="7" viewBox="0 0 4 7"><path d="M0 0V7L4 3.5Z" fill="#000"/></svg>
<div class="a" style="left:1001px;top:696px;width:4px;height:17px;background:#000;"></div>
<div class="a" style="left:0px;top:714px;width:1024px;height:1px;background:#ffffff;"></div>
<div class="a" style="left:0px;top:715px;width:1024px;height:19px;background:#ece9d8;"></div>
<div class="sunk" style="left:5px;top:717px;width:336px;height:16px;"></div>
<div class="sunk" style="left:346px;top:717px;width:235px;height:16px;"></div>
<div class="sunk" style="left:584px;top:717px;width:44px;height:16px;"></div>
<div class="sunk" style="left:633px;top:717px;width:14px;height:16px;"></div>
<div class="sunk" style="left:651px;top:717px;width:147px;height:16px;"></div>
<div class="sunk" style="left:802px;top:717px;width:216px;height:16px;"></div>
<svg class="px" style="left:352px;top:718px" width="16" height="13" viewBox="0 0 16 13"><rect x="4" y="1" width="1" height="9" fill="#1828d0"/><rect x="0" y="5" width="9" height="1" fill="#1828d0"/><rect x="6" y="5" width="1" height="1" fill="#000"/><rect x="6" y="11" width="1" height="1" fill="#000"/><rect x="8" y="5" width="1" height="1" fill="#000"/><rect x="8" y="11" width="1" height="1" fill="#000"/><rect x="10" y="5" width="1" height="1" fill="#000"/><rect x="10" y="11" width="1" height="1" fill="#000"/><rect x="12" y="5" width="1" height="1" fill="#000"/><rect x="12" y="11" width="1" height="1" fill="#000"/><rect x="14" y="5" width="1" height="1" fill="#000"/><rect x="14" y="11" width="1" height="1" fill="#000"/><rect x="14" y="7" width="1" height="1" fill="#000"/><rect x="4" y="7" width="1" height="1" fill="#000"/><rect x="14" y="9" width="1" height="1" fill="#000"/><rect x="4" y="9" width="1" height="1" fill="#000"/></svg>
<div class="t s1" style="left:372px;top:719.5px;letter-spacing:0.17px;">29,28 / 6,72</div>
<div class="t s2" style="left:595px;top:719.5px;">76%</div>
<div class="t s3" style="left:652.5px;top:719.5px;letter-spacing:-0.15px;">Слайд 1 / 1</div>
<div class="t s4" style="left:803.5px;top:719.5px;letter-spacing:-0.1px;">Обычный</div>
<div class="a" style="left:0px;top:734px;width:1024px;height:1px;background:#1f5dd0;"></div><div class="a" style="left:0px;top:735px;width:1024px;height:1px;background:#3089e8;"></div><div class="a" style="left:0px;top:736px;width:1024px;height:1px;background:#3085e6;"></div><div class="a" style="left:0px;top:737px;width:1024px;height:1px;background:#2d72de;"></div>
<div class="a" style="left:0;top:738px;width:1024px;height:30px;background:linear-gradient(#2b60cc 0px,#2b60cc 1px,#4690e8 1px,#4088e6 3px,#2e6ce0 4px,#245bdb 5px,#245bdb 26px,#2152cc 28px,#1a42a8 30px);"></div>
<div class="a" style="left:0;top:738px;width:96px;height:30px;border-radius:0 11px 14px 0 / 0 12px 26px 0;background:linear-gradient(#2f8a32 0%,#62bb62 4%,#47a748 12%,#3a973a 30%,#389638 55%,#41a342 78%,#379a38 90%,#2a7f2c 100%);box-shadow:inset 2px 0 2px #1f651f, inset -3px -1px 4px #1f6a22, inset 0 1px 1px #7ccc7c;"></div>
<svg style="left:11.5px;top:743px" width="20" height="18" viewBox="0 0 20 18"><path d="M1.5 3Q5 1 9 3L8 8.5Q4.5 6.5 0.5 8.5Z" fill="#f05a22"/><path d="M10.5 3.5Q14 5.5 18.5 3.5L17.5 9Q13.5 11 9.5 9Z" fill="#7cc62e"/><path d="M0.2 10Q4 8 8 10L7 15.5Q3 13.5 -0.8 15.5Z" fill="#3c7cf0"/><path d="M9.2 10.5Q13 12.5 17.2 10.5L16.2 16Q12.5 18 8.2 16Z" fill="#f8c820"/></svg>
<div class="t start" style="left:34px;top:741px;color:#fff;font-weight:bold;font-style:italic;font-size:19px;line-height:24px;height:24px;text-shadow:1px 1px 1px #1a5a1c;transform:scaleX(0.87);transform-origin:0 0;">пуск</div>
<svg class="px" style="left:105px;top:744px" width="6" height="22" viewBox="0 0 6 22"><rect x="1" y="1" width="2" height="2" fill="#2c9cf0"/><rect x="0" y="0" width="2" height="2" fill="#0c2c94"/><rect x="4" y="4" width="2" height="2" fill="#2c9cf0"/><rect x="3" y="3" width="2" height="2" fill="#0c2c94"/><rect x="1" y="7" width="2" height="2" fill="#2c9cf0"/><rect x="0" y="6" width="2" height="2" fill="#0c2c94"/><rect x="4" y="10" width="2" height="2" fill="#2c9cf0"/><rect x="3" y="9" width="2" height="2" fill="#0c2c94"/><rect x="1" y="13" width="2" height="2" fill="#2c9cf0"/><rect x="0" y="12" width="2" height="2" fill="#0c2c94"/><rect x="4" y="16" width="2" height="2" fill="#2c9cf0"/><rect x="3" y="15" width="2" height="2" fill="#0c2c94"/><rect x="1" y="19" width="2" height="2" fill="#2c9cf0"/><rect x="0" y="18" width="2" height="2" fill="#0c2c94"/></svg>
<svg style="left:117px;top:744px" width="18" height="17" viewBox="0 0 18 17"><path d="M2 10Q1 4 8 1Q15 3 17 9Q16 14 10 16H4Q1 14 2 10Z" fill="#90a8b0" stroke="#50686c"/><path d="M4 7L9 10L15 5" stroke="#e8f0f0" stroke-width="1.5" fill="none"/><rect x="5" y="13" width="8" height="3" fill="#483838"/></svg>
<svg style="left:142px;top:744px" width="16" height="17" viewBox="0 0 16 17"><ellipse cx="8" cy="8.5" rx="6" ry="7.5" fill="#d81818"/><ellipse cx="8" cy="8.5" rx="2.2" ry="5.5" fill="#245edb"/><ellipse cx="6" cy="6" rx="1.5" ry="3" fill="#f06060" opacity="0.6"/></svg>
<svg style="left:163px;top:744px" width="18" height="17" viewBox="0 0 18 17"><circle cx="9" cy="9" r="6" fill="none" stroke="#40a8f8" stroke-width="3.2"/><rect x="4" y="8" width="11" height="2.4" fill="#40a8f8"/><rect x="11" y="10.5" width="6" height="2.6" fill="#245edb"/><path d="M1 15Q-1 9 8 3.5Q15 -0.5 17 3" stroke="#60b8ff" stroke-width="1.3" fill="none"/></svg>
<svg style="left:186px;top:744px" width="17" height="17" viewBox="0 0 17 17"><circle cx="8.5" cy="8.5" r="8" fill="#f0f0f0"/><path d="M8.5 8.5L8.5 0.5A8 8 0 0 1 16.5 8.5Z" fill="#50b030"/><path d="M8.5 8.5L16.5 8.5A8 8 0 0 1 8.5 16.5Z" fill="#f0c020"/><path d="M8.5 8.5L8.5 16.5A8 8 0 0 1 0.5 8.5Z" fill="#3070e0"/><path d="M8.5 8.5L0.5 8.5A8 8 0 0 1 8.5 0.5Z" fill="#e85020"/><circle cx="8.5" cy="8.5" r="4.8" fill="#fff"/><path d="M7 5.5V11.5L12 8.5Z" fill="#000"/></svg>
<svg style="left:210px;top:744px" width="17" height="17" viewBox="0 0 17 17"><rect x="1" y="2" width="13" height="14" rx="2" fill="#3888e8" stroke="#1850b0"/><rect x="4" y="4" width="8" height="9" fill="#fff"/><path d="M5 11L10 6M10 6V9M10 6H7" stroke="#2050b0" stroke-width="1.3" fill="none"/><path d="M13 1L15 3L13 5L11 3Z" fill="#f08020"/></svg>
<svg class="px" style="left:260px;top:744px" width="6" height="22" viewBox="0 0 6 22"><rect x="1" y="1" width="2" height="2" fill="#2c9cf0"/><rect x="0" y="0" width="2" height="2" fill="#0c2c94"/><rect x="4" y="4" width="2" height="2" fill="#2c9cf0"/><rect x="3" y="3" width="2" height="2" fill="#0c2c94"/><rect x="1" y="7" width="2" height="2" fill="#2c9cf0"/><rect x="0" y="6" width="2" height="2" fill="#0c2c94"/><rect x="4" y="10" width="2" height="2" fill="#2c9cf0"/><rect x="3" y="9" width="2" height="2" fill="#0c2c94"/><rect x="1" y="13" width="2" height="2" fill="#2c9cf0"/><rect x="0" y="12" width="2" height="2" fill="#0c2c94"/><rect x="4" y="16" width="2" height="2" fill="#2c9cf0"/><rect x="3" y="15" width="2" height="2" fill="#0c2c94"/><rect x="1" y="19" width="2" height="2" fill="#2c9cf0"/><rect x="0" y="18" width="2" height="2" fill="#0c2c94"/></svg>
<div class="a" style="left:271px;top:741px;width:125px;height:24px;box-sizing:border-box;border:1px solid;border-color:#5c9af8 #2b63d0 #2556c8 #5c9af8;border-radius:3px;background:linear-gradient(#5a9af8 0%,#3c81f3 12%,#3a7df0 80%,#3070e0 100%);"></div>
<svg style="left:279px;top:746px" width="16" height="14" viewBox="0 0 16 14"><path d="M0.5 2.5Q0.5 1 2 1H6L7.5 3H14Q15.5 3 15.5 4.5V12Q15.5 13.5 14 13.5H2Q0.5 13.5 0.5 12Z" fill="#f8d878" stroke="#b08820"/><path d="M1 5.5H15" stroke="#fff0b0"/></svg>
<div class="t tn" style="left:298px;top:747px;color:#ffd070;font-weight:bold;">3</div>
<div class="t tl" style="left:309px;top:747px;color:#fff;letter-spacing:0px;">Проводник</div>
<svg style="left:387.5px;top:752px" width="5" height="3" viewBox="0 0 5 3"><path d="M0 0H5L2.5 3Z" fill="#fff"/></svg>
<div class="a" style="left:398px;top:741px;width:125px;height:24px;box-sizing:border-box;border:1px solid;border-color:#5c9af8 #2b63d0 #2556c8 #5c9af8;border-radius:3px;background:linear-gradient(#5a9af8 0%,#3c81f3 12%,#3a7df0 80%,#3070e0 100%);"></div>
<svg style="left:406px;top:745px" width="16" height="16" viewBox="0 0 16 16"><path d="M3.5 0.5H12L15.5 4V15.5H3.5Z" fill="#fff" stroke="#7088b0"/><rect x="0.5" y="3.5" width="9" height="8" fill="#2a50a8" stroke="#183880"/><path d="M2 5.5L3.5 9.5L5 6L6.5 9.5L8 5.5" stroke="#fff" stroke-width="1.2" fill="none"/></svg>
<div class="t tl" style="left:426px;top:747px;color:#fff;letter-spacing:0.15px;">Урок_4класс ...</div>
<div class="a" style="left:525px;top:741px;width:125px;height:24px;box-sizing:border-box;border:1px solid;border-color:#5c9af8 #2b63d0 #2556c8 #5c9af8;border-radius:3px;background:linear-gradient(#5a9af8 0%,#3c81f3 12%,#3a7df0 80%,#3070e0 100%);"></div>
<svg style="left:533px;top:745px" width="17" height="16" viewBox="0 0 17 16"><circle cx="8.5" cy="8.5" r="6" fill="none" stroke="#38a0f0" stroke-width="3"/><rect x="4" y="7.5" width="10" height="2.2" fill="#38a0f0"/><rect x="10" y="10" width="6" height="2.5" fill="#3c81f3"/><path d="M1 14Q-1 8 8 3Q15 -0.5 16 3" stroke="#f0c838" stroke-width="1.3" fill="none"/></svg>
<div class="t tn" style="left:552px;top:747px;color:#ffd070;font-weight:bold;">2</div>
<div class="t tl" style="left:563px;top:747px;color:#fff;letter-spacing:0px;">Internet E...</div>
<svg style="left:641.5px;top:752px" width="5" height="3" viewBox="0 0 5 3"><path d="M0 0H5L2.5 3Z" fill="#fff"/></svg>
<div class="a" style="left:652px;top:741px;width:125px;height:24px;box-sizing:border-box;border:1px solid;border-color:#5c9af8 #2b63d0 #2556c8 #5c9af8;border-radius:3px;background:linear-gradient(#5a9af8 0%,#3c81f3 12%,#3a7df0 80%,#3070e0 100%);"></div>
<svg style="left:660px;top:745px" width="16" height="16" viewBox="0 0 16 16"><rect x="0.5" y="0.5" width="15" height="15" rx="1.5" fill="#e8602c" stroke="#a03010"/><rect x="2.5" y="3" width="11" height="10" fill="#fff0e0"/><circle cx="7" cy="8" r="3.2" fill="#d04818"/><path d="M7 8V4.8A3.2 3.2 0 0 1 10.2 8Z" fill="#f8b890"/><rect x="11" y="5" width="2" height="1" fill="#c04010"/><rect x="11" y="7" width="2" height="1" fill="#c04010"/><rect x="11" y="9" width="2" height="1" fill="#c04010"/></svg>
<div class="t tn" style="left:679px;top:747px;color:#ffd070;font-weight:bold;">2</div>
<div class="t tl" style="left:690px;top:747px;color:#fff;letter-spacing:0px;">Microsoft ...</div>
<svg style="left:768px;top:752px" width="5" height="3" viewBox="0 0 5 3"><path d="M0 0H5L2.5 3Z" fill="#fff"/></svg>
<div class="a" style="left:778px;top:742px;width:126px;height:23px;box-sizing:border-box;border:1px solid;border-color:#163e8e #2a5cc8 #2a5cc8 #163e8e;border-radius:3px;background:linear-gradient(#173f96 0%,#1c4db2 18%,#1f53bc 100%);"></div>
<svg style="left:790px;top:746px" width="13" height="16" viewBox="0 0 13 16"><rect x="0.5" y="0.5" width="12" height="15" fill="#f0efe6" stroke="#a08868" stroke-width="1"/><rect x="1" y="1" width="11" height="2" fill="#fff"/><rect x="1" y="3" width="11" height="1" fill="#000"/><rect x="2.6" y="3.6" width="8" height="6.2" fill="#fff" stroke="#000" stroke-width="1.2"/><rect x="4" y="5" width="2.6" height="1" fill="#b00000"/><rect x="4" y="7.2" width="2.2" height="1" fill="#b00000"/><path d="M7 8.3L9.6 5.2V8.3Z" fill="#2020e8"/><path d="M9 6L9.9 5V8.3H9Z" fill="#900090"/><path d="M6.6 9.8V11M6.6 10.5L4.3 13.6M6.6 10.5L8.9 13.6" stroke="#000" stroke-width="1.2" stroke-linecap="round" fill="none"/></svg>
<div class="t tl" style="left:807px;top:748px;color:#fff;letter-spacing:-0.38px;">НАСТРОЕНИЕ ...</div>
<svg class="px" style="left:911px;top:744px" width="6" height="22" viewBox="0 0 6 22"><rect x="1" y="1" width="2" height="2" fill="#2c9cf0"/><rect x="0" y="0" width="2" height="2" fill="#0c2c94"/><rect x="4" y="4" width="2" height="2" fill="#2c9cf0"/><rect x="3" y="3" width="2" height="2" fill="#0c2c94"/><rect x="1" y="7" width="2" height="2" fill="#2c9cf0"/><rect x="0" y="6" width="2" height="2" fill="#0c2c94"/><rect x="4" y="10" width="2" height="2" fill="#2c9cf0"/><rect x="3" y="9" width="2" height="2" fill="#0c2c94"/><rect x="1" y="13" width="2" height="2" fill="#2c9cf0"/><rect x="0" y="12" width="2" height="2" fill="#0c2c94"/><rect x="4" y="16" width="2" height="2" fill="#2c9cf0"/><rect x="3" y="15" width="2" height="2" fill="#0c2c94"/><rect x="1" y="19" width="2" height="2" fill="#2c9cf0"/><rect x="0" y="18" width="2" height="2" fill="#0c2c94"/></svg>
<div class="a" style="left:923px;top:745px;width:14px;height:17px;background:#3a6ad8;"></div>
<div class="t rl" style="left:923.5px;top:747px;color:#fff;letter-spacing:-0.5px;">RL</div>
<div class="a" style="left:949px;top:738px;width:75px;height:30px;background:linear-gradient(#1290e8 0%,#19b0f8 8%,#149ef0 20%,#1290e8 50%,#1290e8 85%,#0f7fd8 100%);border-left:1px solid #0c5fc0;"></div>
<div class="a" style="left:940px;top:743px;width:19px;height:19px;border-radius:10px;background:radial-gradient(circle at 35% 30%,#8cc8ff 0%,#3a8af0 50%,#1a5ad0 100%);box-shadow:0 0 0 1px #e8f4ff inset;"></div>
<svg style="left:945px;top:748px" width="8" height="9" viewBox="0 0 8 9"><path d="M6 1L2 4.5L6 8" stroke="#fff" stroke-width="2" fill="none"/></svg>
<svg style="left:960px;top:744px" width="17" height="17" viewBox="0 0 17 17"><circle cx="8.5" cy="8.5" r="6.5" fill="none" stroke="#e03020" stroke-width="3"/><path d="M2 8.5A6.5 6.5 0 0 1 8.5 2" stroke="#f0d020" stroke-width="3" fill="none"/><path d="M15 8.5A6.5 6.5 0 0 1 8.5 15" stroke="#30b030" stroke-width="3" fill="none"/><circle cx="8.5" cy="8.5" r="2.5" fill="#e03020"/></svg>
<div class="t clk" style="left:986px;top:747px;color:#fff;">0:35</div>
</div></body></html>
